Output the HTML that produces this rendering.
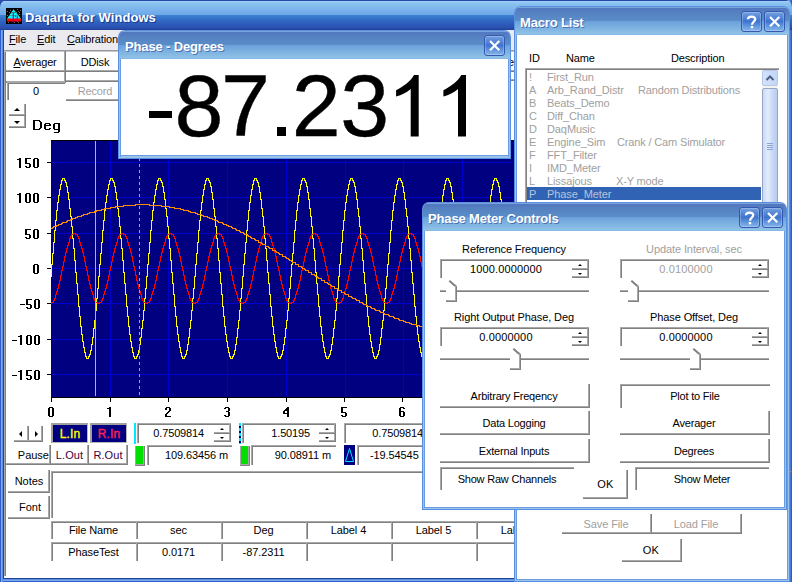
<!DOCTYPE html><html><head><meta charset="utf-8"><style>
html,body{margin:0;padding:0;} body{width:792px;height:582px;overflow:hidden;position:relative;background:#fff;font-family:"Liberation Sans", sans-serif;} div{font-family:"Liberation Sans", sans-serif;} u{text-decoration:underline;text-underline-offset:1px;}
</style></head><body>
<div style="position:absolute;left:0px;top:0px;width:8px;height:8px;background:#2a4aa8;"></div>
<div style="position:absolute;left:784px;top:0px;width:8px;height:8px;background:#6a9adc;"></div>
<div style="position:absolute;left:0px;top:8px;width:792px;height:574px;background:linear-gradient(to right,#2f5ccc 0,#2f5ccc 1px,#7aaee8 1px,#7aaee8 2px,#5a8ee0 2px,#5a8ee0 3px,#24449c 3px,#24449c 4px,#fff 4px);"></div>
<div style="position:absolute;left:3px;top:578px;width:789px;height:4px;background:linear-gradient(to bottom,#24449c 0,#24449c 1px,#5a8ee0 1px,#5a8ee0 2px,#7aaee8 2px,#7aaee8 3px,#2f5ccc 3px);"></div>
<div style="position:absolute;left:786px;top:0px;width:6px;height:582px;background:linear-gradient(to right,#4a7ad6 0,#7eaeee 2px,#5a8ee0 4px,#2f5ccc 5px);"></div>
<div style="position:absolute;left:0px;top:0px;width:792px;height:30px;border-radius:7px 7px 0 0;background:linear-gradient(to bottom,#2448a8 0px,#2448a8 1px,#a6d0f6 1px,#8cc4f0 3px,#6ca6e8 15px,#3c82d2 15px,#2f62bf 22px,#2a4fb0 28px,#24449c 29px,#24449c 30px);"></div>
<div style="position:absolute;left:6px;top:8px;width:16px;height:16px;background:#000;overflow:hidden;"><svg width="16" height="16" viewBox="0 0 16 16"><g fill="#707070"><rect x="1" y="3" width="1" height="1"/><rect x="3" y="4" width="1" height="1"/><rect x="4" y="2" width="1" height="1"/><rect x="11" y="1" width="1" height="1"/><rect x="12" y="3" width="1" height="1"/><rect x="13" y="4" width="1" height="1"/><rect x="14" y="2" width="1" height="1"/><rect x="1" y="7" width="1" height="1"/><rect x="13" y="6" width="1" height="1"/><rect x="2" y="14" width="1" height="1"/><rect x="8" y="14" width="1" height="1"/><rect x="12" y="14" width="1" height="1"/></g><polygon points="7.5,1.3 15.2,11 0.8,11" fill="#00ffff"/><rect x="5" y="4" width="6" height="1" fill="#3a8080"/><rect x="3" y="7" width="10" height="1" fill="#3a8080" opacity="0.6"/><rect x="1" y="10.5" width="14" height="3" fill="#ff0000"/><rect x="6.7" y="5" width="1.2" height="9" fill="#8000c0"/><rect x="10.7" y="8" width="1.2" height="6" fill="#a000c0"/><rect x="9" y="7.5" width="1" height="1.5" fill="#ff0000"/></svg></div>
<div style="position:absolute;left:25px;top:11px;text-align:left;font-size:13px;line-height:13px;color:#fff;font-weight:bold;white-space:nowrap;letter-spacing:0.05px;text-shadow:1px 1px 0 #1a3a90;">Daqarta for Windows</div>
<div style="position:absolute;left:4px;top:30px;width:783px;height:547px;background:#fff;"></div>
<div style="position:absolute;left:4px;top:51px;width:1px;height:525px;background:#a8a8a8;"></div>
<div style="position:absolute;left:5px;top:51px;width:1px;height:525px;background:#808080;"></div>
<div style="position:absolute;left:4px;top:576px;width:783px;height:2px;background:#fff;"></div>
<div style="position:absolute;left:4px;top:30px;width:783px;height:20px;background:#ebeaef;"></div>
<div style="position:absolute;left:4px;top:50px;width:783px;height:1px;background:#9a9a9a;"></div>
<div style="position:absolute;left:4px;top:51px;width:783px;height:1px;background:#c8c8c8;"></div>
<div style="position:absolute;left:9px;top:34px;text-align:left;font-size:11px;line-height:11px;color:#000;font-weight:normal;white-space:nowrap;letter-spacing:-0.15px;"><u>F</u>ile</div>
<div style="position:absolute;left:37px;top:34px;text-align:left;font-size:11px;line-height:11px;color:#000;font-weight:normal;white-space:nowrap;letter-spacing:-0.15px;"><u>E</u>dit</div>
<div style="position:absolute;left:67px;top:34px;text-align:left;font-size:11px;line-height:11px;color:#000;font-weight:normal;white-space:nowrap;letter-spacing:-0.15px;"><u>C</u>alibration</div>
<div style="position:absolute;left:6px;top:51px;width:60px;height:21px;box-sizing:border-box;border-right:1px solid #808080;border-bottom:1px solid #808080;box-shadow:inset -1px -1px 0 #a8a8a8;"></div>
<div style="position:absolute;left:6px;top:57px;width:58px;text-align:center;font-size:11px;line-height:11px;color:#000;font-weight:normal;white-space:nowrap;letter-spacing:-0.15px;"><u>A</u>verager</div>
<div style="position:absolute;left:66px;top:51px;width:60px;height:21px;box-sizing:border-box;border-right:1px solid #808080;border-bottom:1px solid #808080;box-shadow:inset -1px -1px 0 #a8a8a8;"></div>
<div style="position:absolute;left:66px;top:57px;width:58px;text-align:center;font-size:11px;line-height:11px;color:#000;font-weight:normal;white-space:nowrap;letter-spacing:-0.15px;">DDisk</div>
<div style="position:absolute;left:6px;top:72px;width:60px;height:11px;box-sizing:border-box;border-right:1px solid #808080;border-bottom:1px solid #808080;box-shadow:inset -1px -1px 0 #a8a8a8;"></div>
<div style="position:absolute;left:66px;top:72px;width:60px;height:10px;box-sizing:border-box;border-right:1px solid #808080;border-bottom:1px solid #808080;box-shadow:inset -1px -1px 0 #a8a8a8;"></div>
<div style="position:absolute;left:7px;top:82px;width:58px;height:18px;box-sizing:border-box;border-left:1px solid #a8a8a8;border-top:1px solid #a8a8a8;box-shadow:inset 1px 1px 0 #808080;"></div>
<div style="position:absolute;left:7px;top:86px;width:58px;text-align:center;font-size:11px;line-height:11px;color:#000;font-weight:normal;white-space:nowrap;letter-spacing:-0.15px;">0</div>
<div style="position:absolute;left:66px;top:82px;width:60px;height:19px;box-sizing:border-box;border-right:1px solid #808080;border-bottom:1px solid #808080;box-shadow:inset -1px -1px 0 #a8a8a8;"></div>
<div style="position:absolute;left:66px;top:86px;width:58px;text-align:center;font-size:11px;line-height:11px;color:#a0a0a0;font-weight:normal;white-space:nowrap;letter-spacing:-0.15px;">Record</div>
<div style="position:absolute;left:9px;top:104px;width:17px;height:12px;box-sizing:border-box;border-right:1px solid #808080;border-bottom:1px solid #808080;box-shadow:inset -1px -1px 0 #a8a8a8;"></div>
<div style="position:absolute;left:9px;top:116px;width:17px;height:12px;box-sizing:border-box;border-right:1px solid #808080;border-bottom:1px solid #808080;box-shadow:inset -1px -1px 0 #a8a8a8;"></div>
<div style="position:absolute;left:14px;top:108px;width:0px;height:0px;border-left:3px solid transparent;border-right:3px solid transparent;border-bottom:3px solid #000;"></div>
<div style="position:absolute;left:14px;top:121px;width:0px;height:0px;border-left:3px solid transparent;border-right:3px solid transparent;border-top:3px solid #000;"></div>
<div style="position:absolute;left:505px;top:71px;width:9px;height:1px;background:#808080;"></div>
<div style="position:absolute;left:505px;top:70px;width:9px;height:1px;background:#a8a8a8;"></div>
<div style="position:absolute;left:505px;top:80px;width:9px;height:1px;background:#808080;"></div>
<div style="position:absolute;left:505px;top:79px;width:9px;height:1px;background:#a8a8a8;"></div>
<div style="position:absolute;left:508px;top:57px;text-align:left;font-size:11px;line-height:11px;color:#000;font-weight:normal;white-space:nowrap;letter-spacing:0px;">e</div>
<svg width="792" height="582" style="position:absolute;left:0;top:0"><rect x="51" y="140" width="463" height="258" fill="#000080" shape-rendering="crispEdges"/><rect x="51" y="140" width="463" height="1" fill="#000" shape-rendering="crispEdges"/><rect x="51" y="397" width="463" height="1" fill="#000" shape-rendering="crispEdges"/><rect x="51" y="162" width="463" height="1" fill="#0000cc" shape-rendering="crispEdges"/><rect x="47" y="162" width="4" height="1" fill="#000" shape-rendering="crispEdges"/><rect x="51" y="197" width="463" height="1" fill="#0000cc" shape-rendering="crispEdges"/><rect x="47" y="197" width="4" height="1" fill="#000" shape-rendering="crispEdges"/><rect x="51" y="233" width="463" height="1" fill="#0000cc" shape-rendering="crispEdges"/><rect x="47" y="233" width="4" height="1" fill="#000" shape-rendering="crispEdges"/><rect x="51" y="268" width="463" height="1" fill="#0000cc" shape-rendering="crispEdges"/><rect x="47" y="268" width="4" height="1" fill="#000" shape-rendering="crispEdges"/><rect x="51" y="303" width="463" height="1" fill="#0000cc" shape-rendering="crispEdges"/><rect x="47" y="303" width="4" height="1" fill="#000" shape-rendering="crispEdges"/><rect x="51" y="339" width="463" height="1" fill="#0000cc" shape-rendering="crispEdges"/><rect x="47" y="339" width="4" height="1" fill="#000" shape-rendering="crispEdges"/><rect x="51" y="374" width="463" height="1" fill="#0000cc" shape-rendering="crispEdges"/><rect x="47" y="374" width="4" height="1" fill="#000" shape-rendering="crispEdges"/><rect x="110" y="141" width="1" height="255" fill="#0000cc" shape-rendering="crispEdges"/><rect x="168" y="141" width="1" height="255" fill="#0000cc" shape-rendering="crispEdges"/><rect x="227" y="141" width="1" height="255" fill="#0000cc" shape-rendering="crispEdges"/><rect x="286" y="141" width="1" height="255" fill="#0000cc" shape-rendering="crispEdges"/><rect x="345" y="141" width="1" height="255" fill="#0000cc" shape-rendering="crispEdges"/><rect x="403" y="141" width="1" height="255" fill="#0000cc" shape-rendering="crispEdges"/><rect x="462" y="141" width="1" height="255" fill="#0000cc" shape-rendering="crispEdges"/><rect x="51" y="398" width="1" height="4" fill="#000" shape-rendering="crispEdges"/><rect x="110" y="398" width="1" height="4" fill="#000" shape-rendering="crispEdges"/><rect x="168" y="398" width="1" height="4" fill="#000" shape-rendering="crispEdges"/><rect x="227" y="398" width="1" height="4" fill="#000" shape-rendering="crispEdges"/><rect x="286" y="398" width="1" height="4" fill="#000" shape-rendering="crispEdges"/><rect x="344" y="398" width="1" height="4" fill="#000" shape-rendering="crispEdges"/><rect x="402" y="398" width="1" height="4" fill="#000" shape-rendering="crispEdges"/><defs><clipPath id="pc"><rect x="51" y="141" width="463" height="256"/></clipPath></defs><g clip-path="url(#pc)"><path d="M51 264h1v13h-1zM52 253h1v12h-1zM53 242h1v12h-1zM54 230h1v13h-1zM55 220h1v11h-1zM56 210h1v11h-1zM57 202h1v9h-1zM58 195h1v8h-1zM59 189h1v7h-1zM60 184h1v6h-1zM61 180h1v5h-1zM62 178h1v3h-1zM63 178h1v1h-1zM64 178h1v3h-1zM65 180h1v3h-1zM66 182h1v5h-1zM67 186h1v7h-1zM68 192h1v8h-1zM69 199h1v10h-1zM70 208h1v9h-1zM71 216h1v11h-1zM72 226h1v13h-1zM73 238h1v11h-1zM74 248h1v13h-1zM75 260h1v13h-1zM76 272h1v12h-1zM77 283h1v12h-1zM78 294h1v13h-1zM79 306h1v11h-1zM80 316h1v11h-1zM81 326h1v9h-1zM82 334h1v8h-1zM83 341h1v7h-1zM84 347h1v6h-1zM85 352h1v5h-1zM86 356h1v3h-1zM87 358h1v1h-1zM88 356h1v3h-1zM89 354h1v3h-1zM90 350h1v5h-1zM91 344h1v7h-1zM92 337h1v8h-1zM93 328h1v10h-1zM94 320h1v9h-1zM95 310h1v11h-1zM96 298h1v13h-1zM97 288h1v11h-1zM98 276h1v13h-1zM99 264h1v13h-1zM100 253h1v12h-1zM101 242h1v12h-1zM102 230h1v13h-1zM103 220h1v11h-1zM104 210h1v11h-1zM105 202h1v9h-1zM106 195h1v8h-1zM107 189h1v7h-1zM108 184h1v6h-1zM109 180h1v5h-1zM110 178h1v3h-1zM111 178h1v1h-1zM112 178h1v3h-1zM113 180h1v3h-1zM114 182h1v5h-1zM115 186h1v7h-1zM116 192h1v8h-1zM117 199h1v10h-1zM118 208h1v9h-1zM119 216h1v11h-1zM120 226h1v13h-1zM121 238h1v11h-1zM122 248h1v13h-1zM123 260h1v13h-1zM124 272h1v12h-1zM125 283h1v12h-1zM126 294h1v13h-1zM127 306h1v11h-1zM128 316h1v11h-1zM129 326h1v9h-1zM130 334h1v8h-1zM131 341h1v7h-1zM132 347h1v6h-1zM133 352h1v5h-1zM134 356h1v3h-1zM135 358h1v1h-1zM136 356h1v3h-1zM137 354h1v3h-1zM138 350h1v5h-1zM139 344h1v7h-1zM140 337h1v8h-1zM141 328h1v10h-1zM142 320h1v9h-1zM143 310h1v11h-1zM144 298h1v13h-1zM145 288h1v11h-1zM146 276h1v13h-1zM147 264h1v13h-1zM148 253h1v12h-1zM149 242h1v12h-1zM150 230h1v13h-1zM151 220h1v11h-1zM152 210h1v11h-1zM153 202h1v9h-1zM154 195h1v8h-1zM155 189h1v7h-1zM156 184h1v6h-1zM157 180h1v5h-1zM158 178h1v3h-1zM159 178h1v1h-1zM160 178h1v3h-1zM161 180h1v3h-1zM162 182h1v5h-1zM163 186h1v7h-1zM164 192h1v8h-1zM165 199h1v10h-1zM166 208h1v9h-1zM167 216h1v11h-1zM168 226h1v13h-1zM169 238h1v11h-1zM170 248h1v13h-1zM171 260h1v13h-1zM172 272h1v12h-1zM173 283h1v12h-1zM174 294h1v13h-1zM175 306h1v11h-1zM176 316h1v11h-1zM177 326h1v9h-1zM178 334h1v8h-1zM179 341h1v7h-1zM180 347h1v6h-1zM181 352h1v5h-1zM182 356h1v3h-1zM183 358h1v1h-1zM184 356h1v3h-1zM185 354h1v3h-1zM186 350h1v5h-1zM187 344h1v7h-1zM188 337h1v8h-1zM189 328h1v10h-1zM190 320h1v9h-1zM191 310h1v11h-1zM192 298h1v13h-1zM193 288h1v11h-1zM194 276h1v13h-1zM195 264h1v13h-1zM196 253h1v12h-1zM197 242h1v12h-1zM198 230h1v13h-1zM199 220h1v11h-1zM200 210h1v11h-1zM201 202h1v9h-1zM202 195h1v8h-1zM203 189h1v7h-1zM204 184h1v6h-1zM205 180h1v5h-1zM206 178h1v3h-1zM207 178h1v1h-1zM208 178h1v3h-1zM209 180h1v3h-1zM210 182h1v5h-1zM211 186h1v7h-1zM212 192h1v8h-1zM213 199h1v10h-1zM214 208h1v9h-1zM215 216h1v11h-1zM216 226h1v13h-1zM217 238h1v11h-1zM218 248h1v13h-1zM219 260h1v13h-1zM220 272h1v12h-1zM221 283h1v12h-1zM222 294h1v13h-1zM223 306h1v11h-1zM224 316h1v11h-1zM225 326h1v9h-1zM226 334h1v8h-1zM227 341h1v7h-1zM228 347h1v6h-1zM229 352h1v5h-1zM230 356h1v3h-1zM231 358h1v1h-1zM232 356h1v3h-1zM233 354h1v3h-1zM234 350h1v5h-1zM235 344h1v7h-1zM236 337h1v8h-1zM237 328h1v10h-1zM238 320h1v9h-1zM239 310h1v11h-1zM240 298h1v13h-1zM241 288h1v11h-1zM242 276h1v13h-1zM243 264h1v13h-1zM244 253h1v12h-1zM245 242h1v12h-1zM246 230h1v13h-1zM247 220h1v11h-1zM248 210h1v11h-1zM249 202h1v9h-1zM250 195h1v8h-1zM251 189h1v7h-1zM252 184h1v6h-1zM253 180h1v5h-1zM254 178h1v3h-1zM255 178h1v1h-1zM256 178h1v3h-1zM257 180h1v3h-1zM258 182h1v5h-1zM259 186h1v7h-1zM260 192h1v8h-1zM261 199h1v10h-1zM262 208h1v9h-1zM263 216h1v11h-1zM264 226h1v13h-1zM265 238h1v11h-1zM266 248h1v13h-1zM267 260h1v13h-1zM268 272h1v12h-1zM269 283h1v12h-1zM270 294h1v13h-1zM271 306h1v11h-1zM272 316h1v11h-1zM273 326h1v9h-1zM274 334h1v8h-1zM275 341h1v7h-1zM276 347h1v6h-1zM277 352h1v5h-1zM278 356h1v3h-1zM279 358h1v1h-1zM280 356h1v3h-1zM281 354h1v3h-1zM282 350h1v5h-1zM283 344h1v7h-1zM284 337h1v8h-1zM285 328h1v10h-1zM286 320h1v9h-1zM287 310h1v11h-1zM288 298h1v13h-1zM289 288h1v11h-1zM290 276h1v13h-1zM291 264h1v13h-1zM292 253h1v12h-1zM293 242h1v12h-1zM294 230h1v13h-1zM295 220h1v11h-1zM296 210h1v11h-1zM297 202h1v9h-1zM298 195h1v8h-1zM299 189h1v7h-1zM300 184h1v6h-1zM301 180h1v5h-1zM302 178h1v3h-1zM303 178h1v1h-1zM304 178h1v3h-1zM305 180h1v3h-1zM306 182h1v5h-1zM307 186h1v7h-1zM308 192h1v8h-1zM309 199h1v10h-1zM310 208h1v9h-1zM311 216h1v11h-1zM312 226h1v13h-1zM313 238h1v11h-1zM314 248h1v13h-1zM315 260h1v13h-1zM316 272h1v12h-1zM317 283h1v12h-1zM318 294h1v13h-1zM319 306h1v11h-1zM320 316h1v11h-1zM321 326h1v9h-1zM322 334h1v8h-1zM323 341h1v7h-1zM324 347h1v6h-1zM325 352h1v5h-1zM326 356h1v3h-1zM327 358h1v1h-1zM328 356h1v3h-1zM329 354h1v3h-1zM330 350h1v5h-1zM331 344h1v7h-1zM332 337h1v8h-1zM333 328h1v10h-1zM334 320h1v9h-1zM335 310h1v11h-1zM336 298h1v13h-1zM337 288h1v11h-1zM338 276h1v13h-1zM339 264h1v13h-1zM340 253h1v12h-1zM341 242h1v12h-1zM342 230h1v13h-1zM343 220h1v11h-1zM344 210h1v11h-1zM345 202h1v9h-1zM346 195h1v8h-1zM347 189h1v7h-1zM348 184h1v6h-1zM349 180h1v5h-1zM350 178h1v3h-1zM351 178h1v1h-1zM352 178h1v3h-1zM353 180h1v3h-1zM354 182h1v5h-1zM355 186h1v7h-1zM356 192h1v8h-1zM357 199h1v10h-1zM358 208h1v9h-1zM359 216h1v11h-1zM360 226h1v13h-1zM361 238h1v11h-1zM362 248h1v13h-1zM363 260h1v13h-1zM364 272h1v12h-1zM365 283h1v12h-1zM366 294h1v13h-1zM367 306h1v11h-1zM368 316h1v11h-1zM369 326h1v9h-1zM370 334h1v8h-1zM371 341h1v7h-1zM372 347h1v6h-1zM373 352h1v5h-1zM374 356h1v3h-1zM375 358h1v1h-1zM376 356h1v3h-1zM377 354h1v3h-1zM378 350h1v5h-1zM379 344h1v7h-1zM380 337h1v8h-1zM381 328h1v10h-1zM382 320h1v9h-1zM383 310h1v11h-1zM384 298h1v13h-1zM385 288h1v11h-1zM386 276h1v13h-1zM387 264h1v13h-1zM388 253h1v12h-1zM389 242h1v12h-1zM390 230h1v13h-1zM391 220h1v11h-1zM392 210h1v11h-1zM393 202h1v9h-1zM394 195h1v8h-1zM395 189h1v7h-1zM396 184h1v6h-1zM397 180h1v5h-1zM398 178h1v3h-1zM399 178h1v1h-1zM400 178h1v3h-1zM401 180h1v3h-1zM402 182h1v5h-1zM403 186h1v7h-1zM404 192h1v8h-1zM405 199h1v10h-1zM406 208h1v9h-1zM407 216h1v11h-1zM408 226h1v13h-1zM409 238h1v11h-1zM410 248h1v13h-1zM411 260h1v13h-1zM412 272h1v12h-1zM413 283h1v12h-1zM414 294h1v13h-1zM415 306h1v11h-1zM416 316h1v11h-1zM417 326h1v9h-1zM418 334h1v8h-1zM419 341h1v7h-1zM420 347h1v6h-1zM421 352h1v5h-1zM422 356h1v3h-1zM423 358h1v1h-1zM424 356h1v3h-1zM425 354h1v3h-1zM426 350h1v5h-1zM427 344h1v7h-1zM428 337h1v8h-1zM429 328h1v10h-1zM430 320h1v9h-1zM431 310h1v11h-1zM432 298h1v13h-1zM433 288h1v11h-1zM434 276h1v13h-1zM435 264h1v13h-1zM436 253h1v12h-1zM437 242h1v12h-1zM438 230h1v13h-1zM439 220h1v11h-1zM440 210h1v11h-1zM441 202h1v9h-1zM442 195h1v8h-1zM443 189h1v7h-1zM444 184h1v6h-1zM445 180h1v5h-1zM446 178h1v3h-1zM447 178h1v1h-1zM448 178h1v3h-1zM449 180h1v3h-1zM450 182h1v5h-1zM451 186h1v7h-1zM452 192h1v8h-1zM453 199h1v10h-1zM454 208h1v9h-1zM455 216h1v11h-1zM456 226h1v13h-1zM457 238h1v11h-1zM458 248h1v13h-1zM459 260h1v13h-1zM460 272h1v12h-1zM461 283h1v12h-1zM462 294h1v13h-1zM463 306h1v11h-1zM464 316h1v11h-1zM465 326h1v9h-1zM466 334h1v8h-1zM467 341h1v7h-1zM468 347h1v6h-1zM469 352h1v5h-1zM470 356h1v3h-1zM471 358h1v1h-1zM472 356h1v3h-1zM473 354h1v3h-1zM474 350h1v5h-1zM475 344h1v7h-1zM476 337h1v8h-1zM477 328h1v10h-1zM478 320h1v9h-1zM479 310h1v11h-1zM480 298h1v13h-1zM481 288h1v11h-1zM482 276h1v13h-1zM483 264h1v13h-1zM484 253h1v12h-1zM485 242h1v12h-1zM486 230h1v13h-1zM487 220h1v11h-1zM488 210h1v11h-1zM489 202h1v9h-1zM490 195h1v8h-1zM491 189h1v7h-1zM492 184h1v6h-1zM493 180h1v5h-1zM494 178h1v3h-1zM495 178h1v1h-1zM496 178h1v3h-1zM497 180h1v3h-1zM498 182h1v5h-1zM499 186h1v7h-1zM500 192h1v8h-1zM501 199h1v10h-1zM502 208h1v9h-1zM503 216h1v11h-1zM504 226h1v13h-1zM505 238h1v11h-1zM506 248h1v13h-1zM507 260h1v13h-1zM508 272h1v12h-1zM509 283h1v12h-1zM510 294h1v13h-1zM511 306h1v11h-1zM512 316h1v11h-1zM513 326h1v9h-1zM514 334h1v8h-1z" fill="#ffff00" shape-rendering="crispEdges"/><path d="M51 302h1v2h-1zM52 302h1v1h-1zM53 300h1v3h-1zM54 298h1v3h-1zM55 294h1v5h-1zM56 291h1v4h-1zM57 288h1v4h-1zM58 284h1v5h-1zM59 280h1v5h-1zM60 275h1v6h-1zM61 270h1v6h-1zM62 266h1v5h-1zM63 261h1v6h-1zM64 256h1v6h-1zM65 252h1v5h-1zM66 248h1v5h-1zM67 245h1v4h-1zM68 242h1v4h-1zM69 238h1v5h-1zM70 236h1v3h-1zM71 234h1v3h-1zM72 234h1v1h-1zM73 233h1v2h-1zM74 233h1v1h-1zM75 233h1v2h-1zM76 234h1v1h-1zM77 234h1v3h-1zM78 236h1v3h-1zM79 238h1v5h-1zM80 242h1v4h-1zM81 245h1v4h-1zM82 248h1v5h-1zM83 252h1v5h-1zM84 256h1v6h-1zM85 261h1v6h-1zM86 266h1v5h-1zM87 270h1v6h-1zM88 275h1v6h-1zM89 280h1v5h-1zM90 284h1v5h-1zM91 288h1v4h-1zM92 291h1v4h-1zM93 294h1v5h-1zM94 298h1v3h-1zM95 300h1v3h-1zM96 302h1v1h-1zM97 302h1v2h-1zM98 303h1v1h-1zM99 302h1v2h-1zM100 302h1v1h-1zM101 300h1v3h-1zM102 298h1v3h-1zM103 294h1v5h-1zM104 291h1v4h-1zM105 288h1v4h-1zM106 284h1v5h-1zM107 280h1v5h-1zM108 275h1v6h-1zM109 270h1v6h-1zM110 266h1v5h-1zM111 261h1v6h-1zM112 256h1v6h-1zM113 252h1v5h-1zM114 248h1v5h-1zM115 245h1v4h-1zM116 242h1v4h-1zM117 238h1v5h-1zM118 236h1v3h-1zM119 234h1v3h-1zM120 234h1v1h-1zM121 233h1v2h-1zM122 233h1v1h-1zM123 233h1v2h-1zM124 234h1v1h-1zM125 234h1v3h-1zM126 236h1v3h-1zM127 238h1v5h-1zM128 242h1v4h-1zM129 245h1v4h-1zM130 248h1v5h-1zM131 252h1v5h-1zM132 256h1v6h-1zM133 261h1v6h-1zM134 266h1v5h-1zM135 270h1v6h-1zM136 275h1v6h-1zM137 280h1v5h-1zM138 284h1v5h-1zM139 288h1v4h-1zM140 291h1v4h-1zM141 294h1v5h-1zM142 298h1v3h-1zM143 300h1v3h-1zM144 302h1v1h-1zM145 302h1v2h-1zM146 303h1v1h-1zM147 302h1v2h-1zM148 302h1v1h-1zM149 300h1v3h-1zM150 298h1v3h-1zM151 294h1v5h-1zM152 291h1v4h-1zM153 288h1v4h-1zM154 284h1v5h-1zM155 280h1v5h-1zM156 275h1v6h-1zM157 270h1v6h-1zM158 266h1v5h-1zM159 261h1v6h-1zM160 256h1v6h-1zM161 252h1v5h-1zM162 248h1v5h-1zM163 245h1v4h-1zM164 242h1v4h-1zM165 238h1v5h-1zM166 236h1v3h-1zM167 234h1v3h-1zM168 234h1v1h-1zM169 233h1v2h-1zM170 233h1v1h-1zM171 233h1v2h-1zM172 234h1v1h-1zM173 234h1v3h-1zM174 236h1v3h-1zM175 238h1v5h-1zM176 242h1v4h-1zM177 245h1v4h-1zM178 248h1v5h-1zM179 252h1v5h-1zM180 256h1v6h-1zM181 261h1v6h-1zM182 266h1v5h-1zM183 270h1v6h-1zM184 275h1v6h-1zM185 280h1v5h-1zM186 284h1v5h-1zM187 288h1v4h-1zM188 291h1v4h-1zM189 294h1v5h-1zM190 298h1v3h-1zM191 300h1v3h-1zM192 302h1v1h-1zM193 302h1v2h-1zM194 303h1v1h-1zM195 302h1v2h-1zM196 302h1v1h-1zM197 300h1v3h-1zM198 298h1v3h-1zM199 294h1v5h-1zM200 291h1v4h-1zM201 288h1v4h-1zM202 284h1v5h-1zM203 280h1v5h-1zM204 275h1v6h-1zM205 270h1v6h-1zM206 266h1v5h-1zM207 261h1v6h-1zM208 256h1v6h-1zM209 252h1v5h-1zM210 248h1v5h-1zM211 245h1v4h-1zM212 242h1v4h-1zM213 238h1v5h-1zM214 236h1v3h-1zM215 234h1v3h-1zM216 234h1v1h-1zM217 233h1v2h-1zM218 233h1v1h-1zM219 233h1v2h-1zM220 234h1v1h-1zM221 234h1v3h-1zM222 236h1v3h-1zM223 238h1v5h-1zM224 242h1v4h-1zM225 245h1v4h-1zM226 248h1v5h-1zM227 252h1v5h-1zM228 256h1v6h-1zM229 261h1v6h-1zM230 266h1v5h-1zM231 270h1v6h-1zM232 275h1v6h-1zM233 280h1v5h-1zM234 284h1v5h-1zM235 288h1v4h-1zM236 291h1v4h-1zM237 294h1v5h-1zM238 298h1v3h-1zM239 300h1v3h-1zM240 302h1v1h-1zM241 302h1v2h-1zM242 303h1v1h-1zM243 302h1v2h-1zM244 302h1v1h-1zM245 300h1v3h-1zM246 298h1v3h-1zM247 294h1v5h-1zM248 291h1v4h-1zM249 288h1v4h-1zM250 284h1v5h-1zM251 280h1v5h-1zM252 275h1v6h-1zM253 270h1v6h-1zM254 266h1v5h-1zM255 261h1v6h-1zM256 256h1v6h-1zM257 252h1v5h-1zM258 248h1v5h-1zM259 245h1v4h-1zM260 242h1v4h-1zM261 238h1v5h-1zM262 236h1v3h-1zM263 234h1v3h-1zM264 234h1v1h-1zM265 233h1v2h-1zM266 233h1v1h-1zM267 233h1v2h-1zM268 234h1v1h-1zM269 234h1v3h-1zM270 236h1v3h-1zM271 238h1v5h-1zM272 242h1v4h-1zM273 245h1v4h-1zM274 248h1v5h-1zM275 252h1v5h-1zM276 256h1v6h-1zM277 261h1v6h-1zM278 266h1v5h-1zM279 270h1v6h-1zM280 275h1v6h-1zM281 280h1v5h-1zM282 284h1v5h-1zM283 288h1v4h-1zM284 291h1v4h-1zM285 294h1v5h-1zM286 298h1v3h-1zM287 300h1v3h-1zM288 302h1v1h-1zM289 302h1v2h-1zM290 303h1v1h-1zM291 302h1v2h-1zM292 302h1v1h-1zM293 300h1v3h-1zM294 298h1v3h-1zM295 294h1v5h-1zM296 291h1v4h-1zM297 288h1v4h-1zM298 284h1v5h-1zM299 280h1v5h-1zM300 275h1v6h-1zM301 270h1v6h-1zM302 266h1v5h-1zM303 261h1v6h-1zM304 256h1v6h-1zM305 252h1v5h-1zM306 248h1v5h-1zM307 245h1v4h-1zM308 242h1v4h-1zM309 238h1v5h-1zM310 236h1v3h-1zM311 234h1v3h-1zM312 234h1v1h-1zM313 233h1v2h-1zM314 233h1v1h-1zM315 233h1v2h-1zM316 234h1v1h-1zM317 234h1v3h-1zM318 236h1v3h-1zM319 238h1v5h-1zM320 242h1v4h-1zM321 245h1v4h-1zM322 248h1v5h-1zM323 252h1v5h-1zM324 256h1v6h-1zM325 261h1v6h-1zM326 266h1v5h-1zM327 270h1v6h-1zM328 275h1v6h-1zM329 280h1v5h-1zM330 284h1v5h-1zM331 288h1v4h-1zM332 291h1v4h-1zM333 294h1v5h-1zM334 298h1v3h-1zM335 300h1v3h-1zM336 302h1v1h-1zM337 302h1v2h-1zM338 303h1v1h-1zM339 302h1v2h-1zM340 302h1v1h-1zM341 300h1v3h-1zM342 298h1v3h-1zM343 294h1v5h-1zM344 291h1v4h-1zM345 288h1v4h-1zM346 284h1v5h-1zM347 280h1v5h-1zM348 275h1v6h-1zM349 270h1v6h-1zM350 266h1v5h-1zM351 261h1v6h-1zM352 256h1v6h-1zM353 252h1v5h-1zM354 248h1v5h-1zM355 245h1v4h-1zM356 242h1v4h-1zM357 238h1v5h-1zM358 236h1v3h-1zM359 234h1v3h-1zM360 234h1v1h-1zM361 233h1v2h-1zM362 233h1v1h-1zM363 233h1v2h-1zM364 234h1v1h-1zM365 234h1v3h-1zM366 236h1v3h-1zM367 238h1v5h-1zM368 242h1v4h-1zM369 245h1v4h-1zM370 248h1v5h-1zM371 252h1v5h-1zM372 256h1v6h-1zM373 261h1v6h-1zM374 266h1v5h-1zM375 270h1v6h-1zM376 275h1v6h-1zM377 280h1v5h-1zM378 284h1v5h-1zM379 288h1v4h-1zM380 291h1v4h-1zM381 294h1v5h-1zM382 298h1v3h-1zM383 300h1v3h-1zM384 302h1v1h-1zM385 302h1v2h-1zM386 303h1v1h-1zM387 302h1v2h-1zM388 302h1v1h-1zM389 300h1v3h-1zM390 298h1v3h-1zM391 294h1v5h-1zM392 291h1v4h-1zM393 288h1v4h-1zM394 284h1v5h-1zM395 280h1v5h-1zM396 275h1v6h-1zM397 270h1v6h-1zM398 266h1v5h-1zM399 261h1v6h-1zM400 256h1v6h-1zM401 252h1v5h-1zM402 248h1v5h-1zM403 245h1v4h-1zM404 242h1v4h-1zM405 238h1v5h-1zM406 236h1v3h-1zM407 234h1v3h-1zM408 234h1v1h-1zM409 233h1v2h-1zM410 233h1v1h-1zM411 233h1v2h-1zM412 234h1v1h-1zM413 234h1v3h-1zM414 236h1v3h-1zM415 238h1v5h-1zM416 242h1v4h-1zM417 245h1v4h-1zM418 248h1v5h-1zM419 252h1v5h-1zM420 256h1v6h-1zM421 261h1v6h-1zM422 266h1v5h-1zM423 270h1v6h-1zM424 275h1v6h-1zM425 280h1v5h-1zM426 284h1v5h-1zM427 288h1v4h-1zM428 291h1v4h-1zM429 294h1v5h-1zM430 298h1v3h-1zM431 300h1v3h-1zM432 302h1v1h-1zM433 302h1v2h-1zM434 303h1v1h-1zM435 302h1v2h-1zM436 302h1v1h-1zM437 300h1v3h-1zM438 298h1v3h-1zM439 294h1v5h-1zM440 291h1v4h-1zM441 288h1v4h-1zM442 284h1v5h-1zM443 280h1v5h-1zM444 275h1v6h-1zM445 270h1v6h-1zM446 266h1v5h-1zM447 261h1v6h-1zM448 256h1v6h-1zM449 252h1v5h-1zM450 248h1v5h-1zM451 245h1v4h-1zM452 242h1v4h-1zM453 238h1v5h-1zM454 236h1v3h-1zM455 234h1v3h-1zM456 234h1v1h-1zM457 233h1v2h-1zM458 233h1v1h-1zM459 233h1v2h-1zM460 234h1v1h-1zM461 234h1v3h-1zM462 236h1v3h-1zM463 238h1v5h-1zM464 242h1v4h-1zM465 245h1v4h-1zM466 248h1v5h-1zM467 252h1v5h-1zM468 256h1v6h-1zM469 261h1v6h-1zM470 266h1v5h-1zM471 270h1v6h-1zM472 275h1v6h-1zM473 280h1v5h-1zM474 284h1v5h-1zM475 288h1v4h-1zM476 291h1v4h-1zM477 294h1v5h-1zM478 298h1v3h-1zM479 300h1v3h-1zM480 302h1v1h-1zM481 302h1v2h-1zM482 303h1v1h-1zM483 302h1v2h-1zM484 302h1v1h-1zM485 300h1v3h-1zM486 298h1v3h-1zM487 294h1v5h-1zM488 291h1v4h-1zM489 288h1v4h-1zM490 284h1v5h-1zM491 280h1v5h-1zM492 275h1v6h-1zM493 270h1v6h-1zM494 266h1v5h-1zM495 261h1v6h-1zM496 256h1v6h-1zM497 252h1v5h-1zM498 248h1v5h-1zM499 245h1v4h-1zM500 242h1v4h-1zM501 238h1v5h-1zM502 236h1v3h-1zM503 234h1v3h-1zM504 234h1v1h-1zM505 233h1v2h-1zM506 233h1v1h-1zM507 233h1v2h-1zM508 234h1v1h-1zM509 234h1v3h-1zM510 236h1v3h-1zM511 238h1v5h-1zM512 242h1v4h-1zM513 245h1v4h-1zM514 248h1v5h-1z" fill="#ff0000" shape-rendering="crispEdges"/><path d="M51 228h1v1h-1zM52 227h1v2h-1zM53 226h1v2h-1zM54 226h1v1h-1zM55 226h1v1h-1zM56 225h1v2h-1zM57 225h1v1h-1zM58 224h1v2h-1zM59 224h1v1h-1zM60 224h1v1h-1zM61 223h1v2h-1zM62 222h1v2h-1zM63 222h1v1h-1zM64 222h1v1h-1zM65 222h1v1h-1zM66 221h1v2h-1zM67 220h1v2h-1zM68 220h1v1h-1zM69 220h1v1h-1zM70 219h1v2h-1zM71 219h1v1h-1zM72 218h1v2h-1zM73 218h1v1h-1zM74 218h1v1h-1zM75 217h1v2h-1zM76 217h1v1h-1zM77 216h1v2h-1zM78 216h1v1h-1zM79 216h1v1h-1zM80 216h1v1h-1zM81 215h1v2h-1zM82 215h1v1h-1zM83 214h1v2h-1zM84 214h1v1h-1zM85 214h1v1h-1zM86 214h1v1h-1zM87 213h1v2h-1zM88 213h1v1h-1zM89 212h1v2h-1zM90 212h1v1h-1zM91 212h1v1h-1zM92 212h1v1h-1zM93 212h1v1h-1zM94 211h1v2h-1zM95 211h1v1h-1zM96 210h1v2h-1zM97 210h1v1h-1zM98 210h1v1h-1zM99 210h1v1h-1zM100 210h1v1h-1zM101 209h1v2h-1zM102 209h1v1h-1zM103 209h1v1h-1zM104 208h1v2h-1zM105 208h1v1h-1zM106 208h1v1h-1zM107 208h1v1h-1zM108 208h1v1h-1zM109 208h1v1h-1zM110 207h1v2h-1zM111 207h1v1h-1zM112 207h1v1h-1zM113 207h1v1h-1zM114 207h1v1h-1zM115 206h1v2h-1zM116 206h1v1h-1zM117 206h1v1h-1zM118 206h1v1h-1zM119 206h1v1h-1zM120 206h1v1h-1zM121 206h1v1h-1zM122 206h1v1h-1zM123 205h1v2h-1zM124 205h1v1h-1zM125 205h1v1h-1zM126 205h1v1h-1zM127 205h1v1h-1zM128 205h1v1h-1zM129 205h1v1h-1zM130 205h1v1h-1zM131 205h1v1h-1zM132 205h1v1h-1zM133 205h1v1h-1zM134 205h1v1h-1zM135 204h1v2h-1zM136 204h1v1h-1zM137 204h1v1h-1zM138 204h1v1h-1zM139 204h1v1h-1zM140 204h1v1h-1zM141 204h1v1h-1zM142 204h1v1h-1zM143 204h1v1h-1zM144 204h1v1h-1zM145 204h1v1h-1zM146 204h1v1h-1zM147 204h1v1h-1zM148 204h1v1h-1zM149 204h1v2h-1zM150 205h1v1h-1zM151 205h1v1h-1zM152 205h1v1h-1zM153 205h1v1h-1zM154 205h1v1h-1zM155 205h1v1h-1zM156 205h1v1h-1zM157 205h1v1h-1zM158 205h1v1h-1zM159 205h1v1h-1zM160 205h1v1h-1zM161 205h1v2h-1zM162 206h1v1h-1zM163 206h1v1h-1zM164 206h1v1h-1zM165 206h1v1h-1zM166 206h1v1h-1zM167 206h1v1h-1zM168 206h1v1h-1zM169 206h1v2h-1zM170 207h1v1h-1zM171 207h1v1h-1zM172 207h1v1h-1zM173 207h1v1h-1zM174 207h1v2h-1zM175 208h1v1h-1zM176 208h1v1h-1zM177 208h1v1h-1zM178 208h1v1h-1zM179 208h1v1h-1zM180 208h1v2h-1zM181 209h1v1h-1zM182 209h1v1h-1zM183 209h1v2h-1zM184 210h1v1h-1zM185 210h1v1h-1zM186 210h1v1h-1zM187 210h1v1h-1zM188 210h1v2h-1zM189 211h1v1h-1zM190 211h1v2h-1zM191 212h1v1h-1zM192 212h1v1h-1zM193 212h1v1h-1zM194 212h1v1h-1zM195 212h1v2h-1zM196 213h1v1h-1zM197 213h1v2h-1zM198 214h1v1h-1zM199 214h1v1h-1zM200 214h1v1h-1zM201 214h1v2h-1zM202 215h1v1h-1zM203 215h1v2h-1zM204 216h1v1h-1zM205 216h1v1h-1zM206 216h1v1h-1zM207 216h1v2h-1zM208 217h1v1h-1zM209 217h1v2h-1zM210 218h1v1h-1zM211 218h1v1h-1zM212 218h1v2h-1zM213 219h1v1h-1zM214 219h1v2h-1zM215 220h1v1h-1zM216 220h1v1h-1zM217 220h1v2h-1zM218 221h1v2h-1zM219 222h1v1h-1zM220 222h1v1h-1zM221 222h1v1h-1zM222 222h1v2h-1zM223 223h1v2h-1zM224 224h1v1h-1zM225 224h1v1h-1zM226 224h1v2h-1zM227 225h1v1h-1zM228 225h1v2h-1zM229 226h1v1h-1zM230 226h1v1h-1zM231 226h1v2h-1zM232 227h1v2h-1zM233 228h1v1h-1zM234 228h1v1h-1zM235 228h1v2h-1zM236 229h1v2h-1zM237 230h1v1h-1zM238 230h1v1h-1zM239 230h1v2h-1zM240 231h1v2h-1zM241 232h1v1h-1zM242 232h1v1h-1zM243 232h1v2h-1zM244 233h1v2h-1zM245 234h1v1h-1zM246 234h1v1h-1zM247 234h1v2h-1zM248 235h1v2h-1zM249 236h1v1h-1zM250 236h1v2h-1zM251 237h1v2h-1zM252 238h1v1h-1zM253 238h1v1h-1zM254 238h1v2h-1zM255 239h1v2h-1zM256 240h1v1h-1zM257 240h1v1h-1zM258 240h1v3h-1zM259 242h1v1h-1zM260 242h1v1h-1zM261 242h1v2h-1zM262 243h1v2h-1zM263 244h1v1h-1zM264 244h1v1h-1zM265 244h1v3h-1zM266 246h1v1h-1zM267 246h1v1h-1zM268 246h1v2h-1zM269 247h1v2h-1zM270 248h1v1h-1zM271 248h1v1h-1zM272 248h1v3h-1zM273 250h1v1h-1zM274 250h1v1h-1zM275 250h1v2h-1zM276 251h1v2h-1zM277 252h1v1h-1zM278 252h1v2h-1zM279 253h1v2h-1zM280 254h1v1h-1zM281 254h1v1h-1zM282 254h1v3h-1zM283 256h1v1h-1zM284 256h1v1h-1zM285 256h1v2h-1zM286 257h1v2h-1zM287 258h1v1h-1zM288 258h1v2h-1zM289 259h1v2h-1zM290 260h1v1h-1zM291 260h1v2h-1zM292 261h1v2h-1zM293 262h1v1h-1zM294 262h1v1h-1zM295 262h1v3h-1zM296 264h1v1h-1zM297 264h1v1h-1zM298 264h1v3h-1zM299 266h1v1h-1zM300 266h1v1h-1zM301 266h1v2h-1zM302 267h1v2h-1zM303 268h1v1h-1zM304 268h1v2h-1zM305 269h1v2h-1zM306 270h1v1h-1zM307 270h1v1h-1zM308 270h1v3h-1zM309 272h1v1h-1zM310 272h1v1h-1zM311 272h1v3h-1zM312 274h1v1h-1zM313 274h1v1h-1zM314 274h1v2h-1zM315 275h1v2h-1zM316 276h1v1h-1zM317 276h1v2h-1zM318 277h1v2h-1zM319 278h1v1h-1zM320 278h1v1h-1zM321 278h1v3h-1zM322 280h1v1h-1zM323 280h1v1h-1zM324 280h1v3h-1zM325 282h1v1h-1zM326 282h1v1h-1zM327 282h1v2h-1zM328 283h1v2h-1zM329 284h1v1h-1zM330 284h1v2h-1zM331 285h1v2h-1zM332 286h1v1h-1zM333 286h1v1h-1zM334 286h1v3h-1zM335 288h1v1h-1zM336 288h1v1h-1zM337 288h1v2h-1zM338 289h1v2h-1zM339 290h1v1h-1zM340 290h1v1h-1zM341 290h1v3h-1zM342 292h1v1h-1zM343 292h1v1h-1zM344 292h1v2h-1zM345 293h1v2h-1zM346 294h1v1h-1zM347 294h1v1h-1zM348 294h1v3h-1zM349 296h1v1h-1zM350 296h1v1h-1zM351 296h1v2h-1zM352 297h1v2h-1zM353 298h1v1h-1zM354 298h1v1h-1zM355 298h1v2h-1zM356 299h1v2h-1zM357 300h1v1h-1zM358 300h1v1h-1zM359 300h1v3h-1zM360 302h1v1h-1zM361 302h1v1h-1zM362 302h1v2h-1zM363 303h1v2h-1zM364 304h1v1h-1zM365 304h1v1h-1zM366 304h1v2h-1zM367 305h1v2h-1zM368 306h1v1h-1zM369 306h1v1h-1zM370 306h1v2h-1zM371 307h1v2h-1zM372 308h1v1h-1zM373 308h1v1h-1zM374 308h1v2h-1zM375 309h1v2h-1zM376 310h1v1h-1zM377 310h1v1h-1zM378 310h1v1h-1zM379 310h1v2h-1zM380 311h1v2h-1zM381 312h1v1h-1zM382 312h1v1h-1zM383 312h1v2h-1zM384 313h1v2h-1zM385 314h1v1h-1zM386 314h1v1h-1zM387 314h1v1h-1zM388 314h1v2h-1zM389 315h1v2h-1zM390 316h1v1h-1zM391 316h1v1h-1zM392 316h1v1h-1zM393 316h1v2h-1zM394 317h1v2h-1zM395 318h1v1h-1zM396 318h1v1h-1zM397 318h1v1h-1zM398 318h1v2h-1zM399 319h1v2h-1zM400 320h1v1h-1zM401 320h1v1h-1zM402 320h1v1h-1zM403 320h1v2h-1zM404 321h1v1h-1zM405 321h1v2h-1zM406 322h1v1h-1zM407 322h1v1h-1zM408 322h1v1h-1zM409 322h1v2h-1zM410 323h1v1h-1zM411 323h1v2h-1zM412 324h1v1h-1zM413 324h1v1h-1zM414 324h1v1h-1zM415 324h1v1h-1zM416 324h1v2h-1zM417 325h1v1h-1zM418 325h1v1h-1zM419 325h1v2h-1zM420 326h1v1h-1zM421 326h1v1h-1zM422 326h1v1h-1zM423 326h1v1h-1zM424 326h1v2h-1zM425 327h1v1h-1zM426 327h1v1h-1zM427 327h1v2h-1zM428 328h1v1h-1zM429 328h1v1h-1zM430 328h1v1h-1zM431 328h1v1h-1zM432 328h1v1h-1zM433 328h1v2h-1zM434 329h1v1h-1zM435 329h1v1h-1zM436 329h1v1h-1zM437 329h1v1h-1zM438 329h1v2h-1zM439 330h1v1h-1zM440 330h1v1h-1zM441 330h1v1h-1zM442 330h1v1h-1zM443 330h1v1h-1zM444 330h1v1h-1zM445 330h1v1h-1zM446 330h1v1h-1zM447 330h1v2h-1zM448 331h1v1h-1zM449 331h1v1h-1zM450 331h1v1h-1zM451 331h1v1h-1zM452 331h1v1h-1zM453 331h1v1h-1zM454 331h1v1h-1zM455 331h1v1h-1zM456 331h1v1h-1zM457 331h1v1h-1zM458 331h1v1h-1zM459 331h1v1h-1zM460 331h1v1h-1zM461 331h1v1h-1zM462 331h1v1h-1zM463 331h1v1h-1zM464 331h1v1h-1zM465 331h1v1h-1zM466 331h1v1h-1zM467 331h1v1h-1zM468 331h1v1h-1zM469 331h1v1h-1zM470 331h1v1h-1zM471 331h1v1h-1zM472 331h1v1h-1zM473 331h1v1h-1zM474 331h1v1h-1zM475 331h1v1h-1zM476 331h1v1h-1zM477 331h1v1h-1zM478 331h1v1h-1zM479 331h1v1h-1zM480 331h1v1h-1zM481 330h1v2h-1zM482 330h1v1h-1zM483 330h1v1h-1zM484 330h1v1h-1zM485 330h1v1h-1zM486 330h1v1h-1zM487 330h1v1h-1zM488 330h1v1h-1zM489 330h1v1h-1zM490 329h1v2h-1zM491 329h1v1h-1zM492 329h1v1h-1zM493 329h1v1h-1zM494 329h1v1h-1zM495 328h1v2h-1zM496 328h1v1h-1zM497 328h1v1h-1zM498 328h1v1h-1zM499 328h1v1h-1zM500 328h1v1h-1zM501 327h1v2h-1zM502 327h1v1h-1zM503 327h1v1h-1zM504 326h1v2h-1zM505 326h1v1h-1zM506 326h1v1h-1zM507 326h1v1h-1zM508 326h1v1h-1zM509 325h1v2h-1zM510 325h1v1h-1zM511 325h1v1h-1zM512 324h1v2h-1zM513 324h1v1h-1zM514 324h1v1h-1z" fill="#ff8c00" shape-rendering="crispEdges"/></g><rect x="95" y="141" width="1" height="255" fill="#00ffff" shape-rendering="crispEdges"/><rect x="139" y="140" width="1" height="3" fill="#00e8ff" shape-rendering="crispEdges"/><rect x="139" y="146" width="1" height="3" fill="#00e8ff" shape-rendering="crispEdges"/><rect x="139" y="152" width="1" height="3" fill="#00e8ff" shape-rendering="crispEdges"/><rect x="139" y="158" width="1" height="3" fill="#00e8ff" shape-rendering="crispEdges"/><rect x="139" y="164" width="1" height="3" fill="#00e8ff" shape-rendering="crispEdges"/><rect x="139" y="170" width="1" height="3" fill="#00e8ff" shape-rendering="crispEdges"/><rect x="139" y="176" width="1" height="3" fill="#00e8ff" shape-rendering="crispEdges"/><rect x="139" y="182" width="1" height="3" fill="#00e8ff" shape-rendering="crispEdges"/><rect x="139" y="188" width="1" height="3" fill="#00e8ff" shape-rendering="crispEdges"/><rect x="139" y="194" width="1" height="3" fill="#00e8ff" shape-rendering="crispEdges"/><rect x="139" y="200" width="1" height="3" fill="#00e8ff" shape-rendering="crispEdges"/><rect x="139" y="206" width="1" height="3" fill="#00e8ff" shape-rendering="crispEdges"/><rect x="139" y="212" width="1" height="3" fill="#00e8ff" shape-rendering="crispEdges"/><rect x="139" y="218" width="1" height="3" fill="#00e8ff" shape-rendering="crispEdges"/><rect x="139" y="224" width="1" height="3" fill="#00e8ff" shape-rendering="crispEdges"/><rect x="139" y="230" width="1" height="3" fill="#00e8ff" shape-rendering="crispEdges"/><rect x="139" y="236" width="1" height="3" fill="#00e8ff" shape-rendering="crispEdges"/><rect x="139" y="242" width="1" height="3" fill="#00e8ff" shape-rendering="crispEdges"/><rect x="139" y="248" width="1" height="3" fill="#00e8ff" shape-rendering="crispEdges"/><rect x="139" y="254" width="1" height="3" fill="#00e8ff" shape-rendering="crispEdges"/><rect x="139" y="260" width="1" height="3" fill="#00e8ff" shape-rendering="crispEdges"/><rect x="139" y="266" width="1" height="3" fill="#00e8ff" shape-rendering="crispEdges"/><rect x="139" y="272" width="1" height="3" fill="#00e8ff" shape-rendering="crispEdges"/><rect x="139" y="278" width="1" height="3" fill="#00e8ff" shape-rendering="crispEdges"/><rect x="139" y="284" width="1" height="3" fill="#00e8ff" shape-rendering="crispEdges"/><rect x="139" y="290" width="1" height="3" fill="#00e8ff" shape-rendering="crispEdges"/><rect x="139" y="296" width="1" height="3" fill="#00e8ff" shape-rendering="crispEdges"/><rect x="139" y="302" width="1" height="3" fill="#00e8ff" shape-rendering="crispEdges"/><rect x="139" y="308" width="1" height="3" fill="#00e8ff" shape-rendering="crispEdges"/><rect x="139" y="314" width="1" height="3" fill="#00e8ff" shape-rendering="crispEdges"/><rect x="139" y="320" width="1" height="3" fill="#00e8ff" shape-rendering="crispEdges"/><rect x="139" y="326" width="1" height="3" fill="#00e8ff" shape-rendering="crispEdges"/><rect x="139" y="332" width="1" height="3" fill="#00e8ff" shape-rendering="crispEdges"/><rect x="139" y="338" width="1" height="3" fill="#00e8ff" shape-rendering="crispEdges"/><rect x="139" y="344" width="1" height="3" fill="#00e8ff" shape-rendering="crispEdges"/><rect x="139" y="350" width="1" height="3" fill="#00e8ff" shape-rendering="crispEdges"/><rect x="139" y="356" width="1" height="3" fill="#00e8ff" shape-rendering="crispEdges"/><rect x="139" y="362" width="1" height="3" fill="#00e8ff" shape-rendering="crispEdges"/><rect x="139" y="368" width="1" height="3" fill="#00e8ff" shape-rendering="crispEdges"/><rect x="139" y="374" width="1" height="3" fill="#00e8ff" shape-rendering="crispEdges"/><rect x="139" y="380" width="1" height="3" fill="#00e8ff" shape-rendering="crispEdges"/><rect x="139" y="386" width="1" height="3" fill="#00e8ff" shape-rendering="crispEdges"/><rect x="139" y="392" width="1" height="3" fill="#00e8ff" shape-rendering="crispEdges"/></svg>
<svg width="792" height="582" style="position:absolute;left:0;top:0"><path d="M19 158h2v1h-2zM17 159h4v1h-4zM19 160h2v1h-2zM19 161h2v1h-2zM19 162h2v1h-2zM19 163h2v1h-2zM19 164h2v1h-2zM19 165h2v1h-2zM19 166h2v1h-2zM19 167h2v1h-2zM25 158h6v1h-6zM25 159h2v1h-2zM25 160h2v1h-2zM25 161h2v1h-2zM25 162h2v1h-2zM25 163h5v1h-5zM29 164h2v1h-2zM29 165h2v1h-2zM25 166h2v1h-2zM29 166h2v1h-2zM26 167h4v1h-4zM34 158h4v1h-4zM33 159h2v1h-2zM37 159h2v1h-2zM33 160h2v1h-2zM37 160h2v1h-2zM33 161h2v1h-2zM37 161h2v1h-2zM33 162h2v1h-2zM37 162h2v1h-2zM33 163h2v1h-2zM37 163h2v1h-2zM33 164h2v1h-2zM37 164h2v1h-2zM33 165h2v1h-2zM37 165h2v1h-2zM33 166h2v1h-2zM37 166h2v1h-2zM34 167h4v1h-4zM19 193h2v1h-2zM17 194h4v1h-4zM19 195h2v1h-2zM19 196h2v1h-2zM19 197h2v1h-2zM19 198h2v1h-2zM19 199h2v1h-2zM19 200h2v1h-2zM19 201h2v1h-2zM19 202h2v1h-2zM26 193h4v1h-4zM25 194h2v1h-2zM29 194h2v1h-2zM25 195h2v1h-2zM29 195h2v1h-2zM25 196h2v1h-2zM29 196h2v1h-2zM25 197h2v1h-2zM29 197h2v1h-2zM25 198h2v1h-2zM29 198h2v1h-2zM25 199h2v1h-2zM29 199h2v1h-2zM25 200h2v1h-2zM29 200h2v1h-2zM25 201h2v1h-2zM29 201h2v1h-2zM26 202h4v1h-4zM34 193h4v1h-4zM33 194h2v1h-2zM37 194h2v1h-2zM33 195h2v1h-2zM37 195h2v1h-2zM33 196h2v1h-2zM37 196h2v1h-2zM33 197h2v1h-2zM37 197h2v1h-2zM33 198h2v1h-2zM37 198h2v1h-2zM33 199h2v1h-2zM37 199h2v1h-2zM33 200h2v1h-2zM37 200h2v1h-2zM33 201h2v1h-2zM37 201h2v1h-2zM34 202h4v1h-4zM25 229h6v1h-6zM25 230h2v1h-2zM25 231h2v1h-2zM25 232h2v1h-2zM25 233h2v1h-2zM25 234h5v1h-5zM29 235h2v1h-2zM29 236h2v1h-2zM25 237h2v1h-2zM29 237h2v1h-2zM26 238h4v1h-4zM34 229h4v1h-4zM33 230h2v1h-2zM37 230h2v1h-2zM33 231h2v1h-2zM37 231h2v1h-2zM33 232h2v1h-2zM37 232h2v1h-2zM33 233h2v1h-2zM37 233h2v1h-2zM33 234h2v1h-2zM37 234h2v1h-2zM33 235h2v1h-2zM37 235h2v1h-2zM33 236h2v1h-2zM37 236h2v1h-2zM33 237h2v1h-2zM37 237h2v1h-2zM34 238h4v1h-4zM34 264h4v1h-4zM33 265h2v1h-2zM37 265h2v1h-2zM33 266h2v1h-2zM37 266h2v1h-2zM33 267h2v1h-2zM37 267h2v1h-2zM33 268h2v1h-2zM37 268h2v1h-2zM33 269h2v1h-2zM37 269h2v1h-2zM33 270h2v1h-2zM37 270h2v1h-2zM33 271h2v1h-2zM37 271h2v1h-2zM33 272h2v1h-2zM37 272h2v1h-2zM34 273h4v1h-4zM20 304h5v1h-5zM26 299h6v1h-6zM26 300h2v1h-2zM26 301h2v1h-2zM26 302h2v1h-2zM26 303h2v1h-2zM26 304h5v1h-5zM30 305h2v1h-2zM30 306h2v1h-2zM26 307h2v1h-2zM30 307h2v1h-2zM27 308h4v1h-4zM35 299h4v1h-4zM34 300h2v1h-2zM38 300h2v1h-2zM34 301h2v1h-2zM38 301h2v1h-2zM34 302h2v1h-2zM38 302h2v1h-2zM34 303h2v1h-2zM38 303h2v1h-2zM34 304h2v1h-2zM38 304h2v1h-2zM34 305h2v1h-2zM38 305h2v1h-2zM34 306h2v1h-2zM38 306h2v1h-2zM34 307h2v1h-2zM38 307h2v1h-2zM35 308h4v1h-4zM12 340h5v1h-5zM20 335h2v1h-2zM18 336h4v1h-4zM20 337h2v1h-2zM20 338h2v1h-2zM20 339h2v1h-2zM20 340h2v1h-2zM20 341h2v1h-2zM20 342h2v1h-2zM20 343h2v1h-2zM20 344h2v1h-2zM27 335h4v1h-4zM26 336h2v1h-2zM30 336h2v1h-2zM26 337h2v1h-2zM30 337h2v1h-2zM26 338h2v1h-2zM30 338h2v1h-2zM26 339h2v1h-2zM30 339h2v1h-2zM26 340h2v1h-2zM30 340h2v1h-2zM26 341h2v1h-2zM30 341h2v1h-2zM26 342h2v1h-2zM30 342h2v1h-2zM26 343h2v1h-2zM30 343h2v1h-2zM27 344h4v1h-4zM35 335h4v1h-4zM34 336h2v1h-2zM38 336h2v1h-2zM34 337h2v1h-2zM38 337h2v1h-2zM34 338h2v1h-2zM38 338h2v1h-2zM34 339h2v1h-2zM38 339h2v1h-2zM34 340h2v1h-2zM38 340h2v1h-2zM34 341h2v1h-2zM38 341h2v1h-2zM34 342h2v1h-2zM38 342h2v1h-2zM34 343h2v1h-2zM38 343h2v1h-2zM35 344h4v1h-4zM12 375h5v1h-5zM20 370h2v1h-2zM18 371h4v1h-4zM20 372h2v1h-2zM20 373h2v1h-2zM20 374h2v1h-2zM20 375h2v1h-2zM20 376h2v1h-2zM20 377h2v1h-2zM20 378h2v1h-2zM20 379h2v1h-2zM26 370h6v1h-6zM26 371h2v1h-2zM26 372h2v1h-2zM26 373h2v1h-2zM26 374h2v1h-2zM26 375h5v1h-5zM30 376h2v1h-2zM30 377h2v1h-2zM26 378h2v1h-2zM30 378h2v1h-2zM27 379h4v1h-4zM35 370h4v1h-4zM34 371h2v1h-2zM38 371h2v1h-2zM34 372h2v1h-2zM38 372h2v1h-2zM34 373h2v1h-2zM38 373h2v1h-2zM34 374h2v1h-2zM38 374h2v1h-2zM34 375h2v1h-2zM38 375h2v1h-2zM34 376h2v1h-2zM38 376h2v1h-2zM34 377h2v1h-2zM38 377h2v1h-2zM34 378h2v1h-2zM38 378h2v1h-2zM35 379h4v1h-4zM49 407h4v1h-4zM48 408h2v1h-2zM52 408h2v1h-2zM48 409h2v1h-2zM52 409h2v1h-2zM48 410h2v1h-2zM52 410h2v1h-2zM48 411h2v1h-2zM52 411h2v1h-2zM48 412h2v1h-2zM52 412h2v1h-2zM48 413h2v1h-2zM52 413h2v1h-2zM48 414h2v1h-2zM52 414h2v1h-2zM48 415h2v1h-2zM52 415h2v1h-2zM49 416h4v1h-4zM109 407h2v1h-2zM107 408h4v1h-4zM109 409h2v1h-2zM109 410h2v1h-2zM109 411h2v1h-2zM109 412h2v1h-2zM109 413h2v1h-2zM109 414h2v1h-2zM109 415h2v1h-2zM109 416h2v1h-2zM166 407h4v1h-4zM165 408h2v1h-2zM169 408h2v1h-2zM165 409h2v1h-2zM169 409h2v1h-2zM169 410h2v1h-2zM168 411h2v1h-2zM167 412h2v1h-2zM166 413h2v1h-2zM165 414h2v1h-2zM165 415h2v1h-2zM165 416h6v1h-6zM225 407h4v1h-4zM224 408h2v1h-2zM228 408h2v1h-2zM228 409h2v1h-2zM228 410h2v1h-2zM226 411h3v1h-3zM228 412h2v1h-2zM228 413h2v1h-2zM228 414h2v1h-2zM224 415h2v1h-2zM228 415h2v1h-2zM225 416h4v1h-4zM287 407h2v1h-2zM286 408h3v1h-3zM285 409h4v1h-4zM284 410h5v1h-5zM283 411h2v1h-2zM287 411h2v1h-2zM283 412h2v1h-2zM287 412h2v1h-2zM283 413h6v1h-6zM287 414h2v1h-2zM287 415h2v1h-2zM287 416h2v1h-2zM341 407h6v1h-6zM341 408h2v1h-2zM341 409h2v1h-2zM341 410h2v1h-2zM341 411h2v1h-2zM341 412h5v1h-5zM345 413h2v1h-2zM345 414h2v1h-2zM341 415h2v1h-2zM345 415h2v1h-2zM342 416h4v1h-4zM400 407h4v1h-4zM399 408h2v1h-2zM403 408h2v1h-2zM399 409h2v1h-2zM399 410h2v1h-2zM399 411h5v1h-5zM399 412h2v1h-2zM403 412h2v1h-2zM399 413h2v1h-2zM403 413h2v1h-2zM399 414h2v1h-2zM403 414h2v1h-2zM399 415h2v1h-2zM403 415h2v1h-2zM400 416h4v1h-4zM33 120h7v1h-7zM33 121h2v1h-2zM39 121h2v1h-2zM33 122h2v1h-2zM40 122h2v1h-2zM33 123h2v1h-2zM40 123h2v1h-2zM33 124h2v1h-2zM40 124h2v1h-2zM33 125h2v1h-2zM40 125h2v1h-2zM33 126h2v1h-2zM40 126h2v1h-2zM33 127h2v1h-2zM40 127h2v1h-2zM33 128h2v1h-2zM39 128h2v1h-2zM33 129h7v1h-7zM45 123h5v1h-5zM44 124h2v1h-2zM49 124h2v1h-2zM44 125h7v1h-7zM44 126h2v1h-2zM44 127h2v1h-2zM44 128h2v1h-2zM49 128h2v1h-2zM45 129h5v1h-5zM54 123h6v1h-6zM53 124h2v1h-2zM58 124h2v1h-2zM53 125h2v1h-2zM58 125h2v1h-2zM53 126h2v1h-2zM58 126h2v1h-2zM53 127h2v1h-2zM58 127h2v1h-2zM53 128h2v1h-2zM58 128h2v1h-2zM54 129h6v1h-6zM58 130h2v1h-2zM58 131h2v1h-2zM54 132h5v1h-5z" fill="#000" shape-rendering="crispEdges"/></svg>
<div style="position:absolute;left:14px;top:426px;width:15px;height:16px;box-sizing:border-box;border-right:1px solid #808080;border-bottom:1px solid #808080;box-shadow:inset -1px -1px 0 #a8a8a8;"></div>
<div style="position:absolute;left:19px;top:431px;width:0px;height:0px;border-top:3px solid transparent;border-bottom:3px solid transparent;border-right:3px solid #000;"></div>
<div style="position:absolute;left:28px;top:426px;width:15px;height:16px;box-sizing:border-box;border-right:1px solid #808080;border-bottom:1px solid #808080;box-shadow:inset -1px -1px 0 #a8a8a8;"></div>
<div style="position:absolute;left:35px;top:431px;width:0px;height:0px;border-top:3px solid transparent;border-bottom:3px solid transparent;border-left:3px solid #000;"></div>
<div style="position:absolute;left:51px;top:423px;width:37px;height:20px;box-sizing:border-box;border-top:2px solid #a0a0a0;border-left:2px solid #a0a0a0;border-right:1px solid #b8b8b8;border-bottom:1px solid #b8b8b8;background:#000080;"></div>
<div style="position:absolute;left:51px;top:428px;width:38px;text-align:center;font-size:12px;line-height:12px;color:#ffff00;font-weight:normal;white-space:nowrap;letter-spacing:0.1px;-webkit-text-stroke:0.35px #ffff00;">L.In</div>
<div style="position:absolute;left:90px;top:423px;width:37px;height:20px;box-sizing:border-box;border-top:2px solid #a0a0a0;border-left:2px solid #a0a0a0;border-right:1px solid #b8b8b8;border-bottom:1px solid #b8b8b8;background:#000080;"></div>
<div style="position:absolute;left:90px;top:428px;width:38px;text-align:center;font-size:12px;line-height:12px;color:#ff2050;font-weight:normal;white-space:nowrap;letter-spacing:0.1px;-webkit-text-stroke:0.35px #ff2050;">R.In</div>
<div style="position:absolute;left:134px;top:423px;width:2px;height:21px;background:#00e8ff;"></div>
<div style="position:absolute;left:137px;top:423px;width:94px;height:20px;box-sizing:border-box;border-left:1px solid #a8a8a8;border-top:1px solid #a8a8a8;box-shadow:inset 1px 1px 0 #808080;"></div>
<div style="position:absolute;left:214px;top:424px;width:17px;height:10px;box-sizing:border-box;border-right:1px solid #808080;border-bottom:1px solid #808080;box-shadow:inset -1px -1px 0 #a8a8a8;"></div>
<div style="position:absolute;left:214px;top:434px;width:17px;height:8px;box-sizing:border-box;border-right:1px solid #808080;border-bottom:1px solid #808080;box-shadow:inset -1px -1px 0 #a8a8a8;"></div>
<div style="position:absolute;left:220px;top:428px;width:0px;height:0px;border-left:2px solid transparent;border-right:2px solid transparent;border-bottom:2px solid #000;"></div>
<div style="position:absolute;left:220px;top:437px;width:0px;height:0px;border-left:2px solid transparent;border-right:2px solid transparent;border-top:2px solid #000;"></div>
<div style="position:absolute;left:137px;top:428px;width:67px;text-align:right;font-size:11px;line-height:11px;color:#000;font-weight:normal;white-space:nowrap;letter-spacing:-0.15px;">0.7509814</div>
<div style="position:absolute;left:239px;top:423px;width:2px;height:21px;background:repeating-linear-gradient(to bottom,#00e8ff 0 3px,#000080 3px 5px);"></div>
<div style="position:absolute;left:242px;top:423px;width:94px;height:20px;box-sizing:border-box;border-left:1px solid #a8a8a8;border-top:1px solid #a8a8a8;box-shadow:inset 1px 1px 0 #808080;"></div>
<div style="position:absolute;left:319px;top:424px;width:17px;height:10px;box-sizing:border-box;border-right:1px solid #808080;border-bottom:1px solid #808080;box-shadow:inset -1px -1px 0 #a8a8a8;"></div>
<div style="position:absolute;left:319px;top:434px;width:17px;height:8px;box-sizing:border-box;border-right:1px solid #808080;border-bottom:1px solid #808080;box-shadow:inset -1px -1px 0 #a8a8a8;"></div>
<div style="position:absolute;left:325px;top:428px;width:0px;height:0px;border-left:2px solid transparent;border-right:2px solid transparent;border-bottom:2px solid #000;"></div>
<div style="position:absolute;left:325px;top:437px;width:0px;height:0px;border-left:2px solid transparent;border-right:2px solid transparent;border-top:2px solid #000;"></div>
<div style="position:absolute;left:242px;top:428px;width:68px;text-align:right;font-size:11px;line-height:11px;color:#000;font-weight:normal;white-space:nowrap;letter-spacing:-0.15px;">1.50195</div>
<div style="position:absolute;left:344px;top:423px;width:90px;height:20px;box-sizing:border-box;border-left:1px solid #a8a8a8;border-top:1px solid #a8a8a8;box-shadow:inset 1px 1px 0 #808080;"></div>
<div style="position:absolute;left:344px;top:428px;width:79px;text-align:right;font-size:11px;line-height:11px;color:#000;font-weight:normal;white-space:nowrap;letter-spacing:-0.15px;">0.7509814</div>
<div style="position:absolute;left:6px;top:445px;width:45px;height:20px;box-sizing:border-box;border-right:1px solid #808080;border-bottom:1px solid #808080;box-shadow:inset -1px -1px 0 #a8a8a8;"></div>
<div style="position:absolute;left:6px;top:450px;width:43px;text-align:right;font-size:11px;line-height:11px;color:#000;font-weight:normal;white-space:nowrap;letter-spacing:0px;">Pause</div>
<div style="position:absolute;left:51px;top:445px;width:38px;height:20px;box-sizing:border-box;border-right:1px solid #808080;border-bottom:1px solid #808080;box-shadow:inset -1px -1px 0 #a8a8a8;"></div>
<div style="position:absolute;left:51px;top:450px;width:37px;text-align:center;font-size:11px;line-height:11px;color:#400040;font-weight:normal;white-space:nowrap;letter-spacing:0.1px;">L.Out</div>
<div style="position:absolute;left:89px;top:445px;width:39px;height:20px;box-sizing:border-box;border-right:1px solid #808080;border-bottom:1px solid #808080;box-shadow:inset -1px -1px 0 #a8a8a8;"></div>
<div style="position:absolute;left:89px;top:450px;width:38px;text-align:center;font-size:11px;line-height:11px;color:#400040;font-weight:normal;white-space:nowrap;letter-spacing:0.1px;">R.Out</div>
<div style="position:absolute;left:135px;top:446px;width:10px;height:20px;box-sizing:border-box;background:#00e000;border-left:1px solid #a8a8a8;border-bottom:1px solid #808080;border-right:1px solid #808080;box-shadow:inset -1px -1px 0 #a8a8a8;"></div>
<div style="position:absolute;left:147px;top:445px;width:85px;height:20px;box-sizing:border-box;border-left:1px solid #a8a8a8;border-top:1px solid #a8a8a8;box-shadow:inset 1px 1px 0 #808080;"></div>
<div style="position:absolute;left:147px;top:450px;width:81px;text-align:right;font-size:11px;line-height:11px;color:#000;font-weight:normal;white-space:nowrap;letter-spacing:-0.1px;">109.63456 m</div>
<div style="position:absolute;left:240px;top:446px;width:10px;height:20px;box-sizing:border-box;background:#00e000;border-left:1px solid #a8a8a8;border-bottom:1px solid #808080;border-right:1px solid #808080;box-shadow:inset -1px -1px 0 #a8a8a8;"></div>
<div style="position:absolute;left:251px;top:445px;width:85px;height:20px;box-sizing:border-box;border-left:1px solid #a8a8a8;border-top:1px solid #a8a8a8;box-shadow:inset 1px 1px 0 #808080;"></div>
<div style="position:absolute;left:251px;top:450px;width:80px;text-align:right;font-size:11px;line-height:11px;color:#000;font-weight:normal;white-space:nowrap;letter-spacing:-0.1px;">90.08911 m</div>
<div style="position:absolute;left:344px;top:445px;width:11px;height:20px;background:#000080;"><svg width="11" height="20"><polygon points="5.5,3.5 9.5,16.5 1.5,16.5" fill="none" stroke="#00e0ff" stroke-width="1"/></svg></div>
<div style="position:absolute;left:357px;top:445px;width:80px;height:20px;box-sizing:border-box;border-left:1px solid #a8a8a8;border-top:1px solid #a8a8a8;box-shadow:inset 1px 1px 0 #808080;"></div>
<div style="position:absolute;left:370px;top:450px;text-align:left;font-size:11px;line-height:11px;color:#000;font-weight:normal;white-space:nowrap;letter-spacing:-0.1px;">-19.54545 m</div>
<div style="position:absolute;left:8px;top:470px;width:42px;height:23px;box-sizing:border-box;border-right:1px solid #808080;border-bottom:1px solid #808080;box-shadow:inset -1px -1px 0 #a8a8a8;"></div>
<div style="position:absolute;left:9px;top:476px;width:40px;text-align:center;font-size:11px;line-height:11px;color:#000;font-weight:normal;white-space:nowrap;letter-spacing:0px;">Notes</div>
<div style="position:absolute;left:8px;top:496px;width:42px;height:23px;box-sizing:border-box;border-right:1px solid #808080;border-bottom:1px solid #808080;box-shadow:inset -1px -1px 0 #a8a8a8;"></div>
<div style="position:absolute;left:10px;top:502px;width:40px;text-align:center;font-size:11px;line-height:11px;color:#000;font-weight:normal;white-space:nowrap;letter-spacing:0px;">Font</div>
<div style="position:absolute;left:51px;top:471px;width:740px;height:47px;box-sizing:border-box;border-left:1px solid #a8a8a8;border-top:1px solid #a8a8a8;box-shadow:inset 1px 1px 0 #808080;"></div>
<div style="position:absolute;left:51px;top:521px;width:85px;height:18px;box-sizing:border-box;border-left:1px solid #a8a8a8;border-top:1px solid #a8a8a8;box-shadow:inset 1px 1px 0 #808080;"></div>
<div style="position:absolute;left:51px;top:525px;width:85px;text-align:center;font-size:11px;line-height:11px;color:#000;font-weight:normal;white-space:nowrap;letter-spacing:-0.1px;">File Name</div>
<div style="position:absolute;left:51px;top:542px;width:85px;height:19px;box-sizing:border-box;border-left:1px solid #a8a8a8;border-top:1px solid #a8a8a8;box-shadow:inset 1px 1px 0 #808080;"></div>
<div style="position:absolute;left:51px;top:547px;width:85px;text-align:center;font-size:11px;line-height:11px;color:#000;font-weight:normal;white-space:nowrap;letter-spacing:-0.1px;">PhaseTest</div>
<div style="position:absolute;left:136px;top:521px;width:85px;height:18px;box-sizing:border-box;border-left:1px solid #a8a8a8;border-top:1px solid #a8a8a8;box-shadow:inset 1px 1px 0 #808080;"></div>
<div style="position:absolute;left:136px;top:525px;width:85px;text-align:center;font-size:11px;line-height:11px;color:#000;font-weight:normal;white-space:nowrap;letter-spacing:-0.1px;">sec</div>
<div style="position:absolute;left:136px;top:542px;width:85px;height:19px;box-sizing:border-box;border-left:1px solid #a8a8a8;border-top:1px solid #a8a8a8;box-shadow:inset 1px 1px 0 #808080;"></div>
<div style="position:absolute;left:136px;top:547px;width:85px;text-align:center;font-size:11px;line-height:11px;color:#000;font-weight:normal;white-space:nowrap;letter-spacing:-0.1px;">0.0171</div>
<div style="position:absolute;left:221px;top:521px;width:85px;height:18px;box-sizing:border-box;border-left:1px solid #a8a8a8;border-top:1px solid #a8a8a8;box-shadow:inset 1px 1px 0 #808080;"></div>
<div style="position:absolute;left:221px;top:525px;width:85px;text-align:center;font-size:11px;line-height:11px;color:#000;font-weight:normal;white-space:nowrap;letter-spacing:-0.1px;">Deg</div>
<div style="position:absolute;left:221px;top:542px;width:85px;height:19px;box-sizing:border-box;border-left:1px solid #a8a8a8;border-top:1px solid #a8a8a8;box-shadow:inset 1px 1px 0 #808080;"></div>
<div style="position:absolute;left:221px;top:547px;width:85px;text-align:center;font-size:11px;line-height:11px;color:#000;font-weight:normal;white-space:nowrap;letter-spacing:-0.1px;">-87.2311</div>
<div style="position:absolute;left:306px;top:521px;width:85px;height:18px;box-sizing:border-box;border-left:1px solid #a8a8a8;border-top:1px solid #a8a8a8;box-shadow:inset 1px 1px 0 #808080;"></div>
<div style="position:absolute;left:306px;top:525px;width:85px;text-align:center;font-size:11px;line-height:11px;color:#000;font-weight:normal;white-space:nowrap;letter-spacing:-0.1px;">Label 4</div>
<div style="position:absolute;left:306px;top:542px;width:85px;height:19px;box-sizing:border-box;border-left:1px solid #a8a8a8;border-top:1px solid #a8a8a8;box-shadow:inset 1px 1px 0 #808080;"></div>
<div style="position:absolute;left:306px;top:547px;width:85px;text-align:center;font-size:11px;line-height:11px;color:#000;font-weight:normal;white-space:nowrap;letter-spacing:-0.1px;"></div>
<div style="position:absolute;left:391px;top:521px;width:85px;height:18px;box-sizing:border-box;border-left:1px solid #a8a8a8;border-top:1px solid #a8a8a8;box-shadow:inset 1px 1px 0 #808080;"></div>
<div style="position:absolute;left:391px;top:525px;width:85px;text-align:center;font-size:11px;line-height:11px;color:#000;font-weight:normal;white-space:nowrap;letter-spacing:-0.1px;">Label 5</div>
<div style="position:absolute;left:391px;top:542px;width:85px;height:19px;box-sizing:border-box;border-left:1px solid #a8a8a8;border-top:1px solid #a8a8a8;box-shadow:inset 1px 1px 0 #808080;"></div>
<div style="position:absolute;left:391px;top:547px;width:85px;text-align:center;font-size:11px;line-height:11px;color:#000;font-weight:normal;white-space:nowrap;letter-spacing:-0.1px;"></div>
<div style="position:absolute;left:476px;top:521px;width:85px;height:18px;box-sizing:border-box;border-left:1px solid #a8a8a8;border-top:1px solid #a8a8a8;box-shadow:inset 1px 1px 0 #808080;"></div>
<div style="position:absolute;left:476px;top:525px;width:85px;text-align:center;font-size:11px;line-height:11px;color:#000;font-weight:normal;white-space:nowrap;letter-spacing:-0.1px;">Label 6</div>
<div style="position:absolute;left:476px;top:542px;width:85px;height:19px;box-sizing:border-box;border-left:1px solid #a8a8a8;border-top:1px solid #a8a8a8;box-shadow:inset 1px 1px 0 #808080;"></div>
<div style="position:absolute;left:476px;top:547px;width:85px;text-align:center;font-size:11px;line-height:11px;color:#000;font-weight:normal;white-space:nowrap;letter-spacing:-0.1px;"></div>
<div style="position:absolute;left:118px;top:30px;width:393px;height:129px;box-sizing:border-box;background:#5a8ede;border-radius:7px 7px 0 0;"></div>
<div style="position:absolute;left:119px;top:31px;width:391px;height:127px;box-sizing:border-box;background:#9ac4ec;border-radius:6px 6px 0 0;"></div>
<div style="position:absolute;left:120px;top:32px;width:389px;height:125px;box-sizing:border-box;background:#6a9ce2;border-radius:5px 5px 0 0;"></div>
<div style="position:absolute;left:119px;top:31px;width:391px;height:28px;border-radius:6px 6px 0 0;background:linear-gradient(to bottom,#90b8e8 0px,#5278c0 1.5px,#5580c0 5px,#5a8ec8 14px,#6aa0da 14px,#8cc0e6 26px,#92c6ea 27px,#7aaae2 28px);"></div>
<div style="position:absolute;left:125px;top:40px;text-align:left;font-size:13px;line-height:13px;color:#fff;font-weight:bold;white-space:nowrap;letter-spacing:-0.15px;text-shadow:1px 1px 0 rgba(40,70,150,0.6);">Phase - Degrees</div>
<div style="position:absolute;left:484px;top:35px;width:21px;height:21px;box-sizing:border-box;border:1px solid #3558b0;border-radius:3px;background:linear-gradient(to bottom,#74a0e0 0,#4e80d4 35%,#3f74ce 50%,#6a9ee0 80%,#84b4ea 100%);box-shadow:inset 0 0 0 1px rgba(255,255,255,0.22);"><svg width="21" height="21" viewBox="0 0 21 21" style="position:absolute;left:-1px;top:-1px;"><path d="M6,6 L15.3,15.3 M15.3,6 L6,15.3" stroke="#fff" stroke-width="2.2"/></svg></div>
<div style="position:absolute;left:121px;top:59px;width:387px;height:97px;background:#fff;"></div>
<div style="position:absolute;left:149px;top:111px;width:23px;height:7px;background:#000;"></div>
<div style="position:absolute;left:174.48px;top:61.50px;font-size:88px;line-height:88px;color:#000;white-space:nowrap;-webkit-text-stroke:0.4px #000;">8</div>
<div style="position:absolute;left:220.99px;top:61.50px;font-size:88px;line-height:88px;color:#000;white-space:nowrap;-webkit-text-stroke:0.4px #000;">7</div>
<div style="position:absolute;left:291.87px;top:61.50px;font-size:88px;line-height:88px;color:#000;white-space:nowrap;-webkit-text-stroke:0.4px #000;">2</div>
<div style="position:absolute;left:340.25px;top:61.50px;font-size:88px;line-height:88px;color:#000;white-space:nowrap;-webkit-text-stroke:0.4px #000;">3</div>
<div style="position:absolute;left:277px;top:127px;width:9px;height:9px;background:#000;"></div>
<svg width="792" height="582" style="position:absolute;left:0;top:0"><path d="M418.7,75 L418.7,136.5 L410.7,136.5 L410.7,89 C406.7,92.5 401.7,95 396.09999999999997,96.5 L396.09999999999997,90.2 C403.7,86.5 410.7,81 414.0,75 Z M466,75 L466,136.5 L458,136.5 L458,89 C454,92.5 449,95 443.4,96.5 L443.4,90.2 C451,86.5 458,81 461.3,75 Z" fill="#000"/></svg>
<div style="position:absolute;left:121px;top:155px;width:387px;height:4px;background:linear-gradient(to bottom,#6a9ce2 0,#6a9ce2 1px,#9ac4ec 1px,#9ac4ec 3px,#5a8ede 3px);"></div>
<div style="position:absolute;left:514px;top:6px;width:276px;height:576px;box-sizing:border-box;background:#5a8ede;border-radius:7px 7px 0 0;"></div>
<div style="position:absolute;left:515px;top:7px;width:274px;height:574px;box-sizing:border-box;background:#9ac4ec;border-radius:6px 6px 0 0;"></div>
<div style="position:absolute;left:516px;top:8px;width:272px;height:572px;box-sizing:border-box;background:#6a9ce2;border-radius:5px 5px 0 0;"></div>
<div style="position:absolute;left:515px;top:7px;width:274px;height:28px;border-radius:6px 6px 0 0;background:linear-gradient(to bottom,#90b8e8 0px,#5278c0 1.5px,#5580c0 5px,#5a8ec8 14px,#6aa0da 14px,#8cc0e6 26px,#92c6ea 27px,#7aaae2 28px);"></div>
<div style="position:absolute;left:520px;top:16px;text-align:left;font-size:13px;line-height:13px;color:#fff;font-weight:bold;white-space:nowrap;letter-spacing:-0.15px;text-shadow:1px 1px 0 rgba(40,70,150,0.6);">Macro List</div>
<div style="position:absolute;left:741px;top:11px;width:21px;height:21px;box-sizing:border-box;border:1px solid #3558b0;border-radius:3px;background:linear-gradient(to bottom,#74a0e0 0,#4e80d4 35%,#3f74ce 50%,#6a9ee0 80%,#84b4ea 100%);box-shadow:inset 0 0 0 1px rgba(255,255,255,0.22);"><svg width="21" height="21" viewBox="0 0 21 21" style="position:absolute;left:-1px;top:-1px;"><path d="M6.9,8.3 C6.9,4.9 14.3,4.7 14.3,8.1 C14.3,10.7 11,10.6 11,13.8" stroke="#fff" stroke-width="2.2" fill="none"/><rect x="9.8" y="15" width="2.4" height="2.3" fill="#fff"/></svg></div>
<div style="position:absolute;left:764px;top:11px;width:21px;height:21px;box-sizing:border-box;border:1px solid #3558b0;border-radius:3px;background:linear-gradient(to bottom,#74a0e0 0,#4e80d4 35%,#3f74ce 50%,#6a9ee0 80%,#84b4ea 100%);box-shadow:inset 0 0 0 1px rgba(255,255,255,0.22);"><svg width="21" height="21" viewBox="0 0 21 21" style="position:absolute;left:-1px;top:-1px;"><path d="M6,6 L15.3,15.3 M15.3,6 L6,15.3" stroke="#fff" stroke-width="2.2"/></svg></div>
<div style="position:absolute;left:517px;top:35px;width:270px;height:544px;background:#fff;"></div>
<div style="position:absolute;left:529px;top:53px;text-align:left;font-size:11px;line-height:11px;color:#000;font-weight:normal;white-space:nowrap;letter-spacing:-0.15px;">ID</div>
<div style="position:absolute;left:566px;top:53px;text-align:left;font-size:11px;line-height:11px;color:#000;font-weight:normal;white-space:nowrap;letter-spacing:-0.15px;">Name</div>
<div style="position:absolute;left:671px;top:53px;text-align:left;font-size:11px;line-height:11px;color:#000;font-weight:normal;white-space:nowrap;letter-spacing:-0.15px;">Description</div>
<div style="position:absolute;left:525px;top:68px;width:254px;height:142px;box-sizing:border-box;border-left:1px solid #a8a8a8;border-top:1px solid #a8a8a8;box-shadow:inset 1px 1px 0 #808080;"></div>
<div style="position:absolute;left:529px;top:72px;text-align:left;font-size:11px;line-height:11px;color:#a0a0a0;font-weight:normal;white-space:nowrap;letter-spacing:-0.15px;">!</div>
<div style="position:absolute;left:547px;top:72px;text-align:left;font-size:11px;line-height:11px;color:#a0a0a0;font-weight:normal;white-space:nowrap;letter-spacing:-0.1px;">First_Run</div>
<div style="position:absolute;left:529px;top:85px;text-align:left;font-size:11px;line-height:11px;color:#a0a0a0;font-weight:normal;white-space:nowrap;letter-spacing:-0.15px;">A</div>
<div style="position:absolute;left:547px;top:85px;text-align:left;font-size:11px;line-height:11px;color:#a0a0a0;font-weight:normal;white-space:nowrap;letter-spacing:-0.1px;">Arb_Rand_Distr</div>
<div style="position:absolute;left:638px;top:85px;text-align:left;font-size:11px;line-height:11px;color:#a0a0a0;font-weight:normal;white-space:nowrap;letter-spacing:-0.15px;">Random Distributions</div>
<div style="position:absolute;left:529px;top:98px;text-align:left;font-size:11px;line-height:11px;color:#a0a0a0;font-weight:normal;white-space:nowrap;letter-spacing:-0.15px;">B</div>
<div style="position:absolute;left:547px;top:98px;text-align:left;font-size:11px;line-height:11px;color:#a0a0a0;font-weight:normal;white-space:nowrap;letter-spacing:-0.1px;">Beats_Demo</div>
<div style="position:absolute;left:529px;top:111px;text-align:left;font-size:11px;line-height:11px;color:#a0a0a0;font-weight:normal;white-space:nowrap;letter-spacing:-0.15px;">C</div>
<div style="position:absolute;left:547px;top:111px;text-align:left;font-size:11px;line-height:11px;color:#a0a0a0;font-weight:normal;white-space:nowrap;letter-spacing:-0.1px;">Diff_Chan</div>
<div style="position:absolute;left:529px;top:124px;text-align:left;font-size:11px;line-height:11px;color:#a0a0a0;font-weight:normal;white-space:nowrap;letter-spacing:-0.15px;">D</div>
<div style="position:absolute;left:547px;top:124px;text-align:left;font-size:11px;line-height:11px;color:#a0a0a0;font-weight:normal;white-space:nowrap;letter-spacing:-0.1px;">DaqMusic</div>
<div style="position:absolute;left:529px;top:137px;text-align:left;font-size:11px;line-height:11px;color:#a0a0a0;font-weight:normal;white-space:nowrap;letter-spacing:-0.15px;">E</div>
<div style="position:absolute;left:547px;top:137px;text-align:left;font-size:11px;line-height:11px;color:#a0a0a0;font-weight:normal;white-space:nowrap;letter-spacing:-0.1px;">Engine_Sim</div>
<div style="position:absolute;left:617px;top:137px;text-align:left;font-size:11px;line-height:11px;color:#a0a0a0;font-weight:normal;white-space:nowrap;letter-spacing:-0.15px;">Crank / Cam Simulator</div>
<div style="position:absolute;left:529px;top:150px;text-align:left;font-size:11px;line-height:11px;color:#a0a0a0;font-weight:normal;white-space:nowrap;letter-spacing:-0.15px;">F</div>
<div style="position:absolute;left:547px;top:150px;text-align:left;font-size:11px;line-height:11px;color:#a0a0a0;font-weight:normal;white-space:nowrap;letter-spacing:-0.1px;">FFT_Filter</div>
<div style="position:absolute;left:529px;top:163px;text-align:left;font-size:11px;line-height:11px;color:#a0a0a0;font-weight:normal;white-space:nowrap;letter-spacing:-0.15px;">I</div>
<div style="position:absolute;left:547px;top:163px;text-align:left;font-size:11px;line-height:11px;color:#a0a0a0;font-weight:normal;white-space:nowrap;letter-spacing:-0.1px;">IMD_Meter</div>
<div style="position:absolute;left:529px;top:176px;text-align:left;font-size:11px;line-height:11px;color:#a0a0a0;font-weight:normal;white-space:nowrap;letter-spacing:-0.15px;">L</div>
<div style="position:absolute;left:547px;top:176px;text-align:left;font-size:11px;line-height:11px;color:#a0a0a0;font-weight:normal;white-space:nowrap;letter-spacing:-0.1px;">Lissajous</div>
<div style="position:absolute;left:616px;top:176px;text-align:left;font-size:11px;line-height:11px;color:#a0a0a0;font-weight:normal;white-space:nowrap;letter-spacing:-0.15px;">X-Y mode</div>
<div style="position:absolute;left:527px;top:187px;width:234px;height:13px;background:#3163b5;"></div>
<div style="position:absolute;left:529px;top:189px;text-align:left;font-size:11px;line-height:11px;color:#b8c4dc;font-weight:normal;white-space:nowrap;letter-spacing:-0.15px;">P</div>
<div style="position:absolute;left:547px;top:189px;text-align:left;font-size:11px;line-height:11px;color:#b8c4dc;font-weight:normal;white-space:nowrap;letter-spacing:-0.1px;">Phase_Meter</div>
<div style="position:absolute;left:762px;top:70px;width:16px;height:140px;background:#f4f4f0;"></div>
<div style="position:absolute;left:762px;top:70px;width:16px;height:16px;box-sizing:border-box;border:1px solid #b4c8ee;border-radius:2px;background:linear-gradient(to right,#d4e2fa,#c2d6f6);"><svg width="14" height="14"><path d="M3.5,9 L7,5.5 L10.5,9" stroke="#4d6185" stroke-width="2" fill="none"/></svg></div>
<div style="position:absolute;left:762px;top:88px;width:16px;height:122px;box-sizing:border-box;border:1px solid #98a6c4;border-radius:2px;background:linear-gradient(to right,#c8daf8,#e2ecfc 35%,#c4d6f4 75%,#b8cbee);"><svg width="14" height="120"><path d="M4,54.5h6M4,56.5h6M4,58.5h6M4,60.5h6" stroke="#8ca4d0" stroke-width="1"/></svg></div>
<div style="position:absolute;left:562px;top:514px;width:90px;height:20px;box-sizing:border-box;border-right:1px solid #808080;border-bottom:1px solid #808080;box-shadow:inset -1px -1px 0 #a8a8a8;"></div>
<div style="position:absolute;left:562px;top:519px;width:88px;text-align:center;font-size:11px;line-height:11px;color:#a0a0a0;font-weight:normal;white-space:nowrap;letter-spacing:-0.1px;">Save File</div>
<div style="position:absolute;left:652px;top:514px;width:90px;height:20px;box-sizing:border-box;border-right:1px solid #808080;border-bottom:1px solid #808080;box-shadow:inset -1px -1px 0 #a8a8a8;"></div>
<div style="position:absolute;left:652px;top:519px;width:88px;text-align:center;font-size:11px;line-height:11px;color:#a0a0a0;font-weight:normal;white-space:nowrap;letter-spacing:-0.1px;">Load File</div>
<div style="position:absolute;left:622px;top:539px;width:60px;height:23px;box-sizing:border-box;border-right:1px solid #808080;border-bottom:1px solid #808080;box-shadow:inset -1px -1px 0 #a8a8a8;"></div>
<div style="position:absolute;left:622px;top:545px;width:58px;text-align:center;font-size:11px;line-height:11px;color:#000;font-weight:normal;white-space:nowrap;letter-spacing:0.2px;">OK</div>
<div style="position:absolute;left:422px;top:202px;width:365px;height:308px;box-sizing:border-box;background:#5a8ede;border-radius:7px 7px 0 0;"></div>
<div style="position:absolute;left:423px;top:203px;width:363px;height:306px;box-sizing:border-box;background:#9ac4ec;border-radius:6px 6px 0 0;"></div>
<div style="position:absolute;left:424px;top:204px;width:361px;height:304px;box-sizing:border-box;background:#6a9ce2;border-radius:5px 5px 0 0;"></div>
<div style="position:absolute;left:423px;top:203px;width:363px;height:28px;border-radius:6px 6px 0 0;background:linear-gradient(to bottom,#90b8e8 0px,#5278c0 1.5px,#5580c0 5px,#5a8ec8 14px,#6aa0da 14px,#8cc0e6 26px,#92c6ea 27px,#7aaae2 28px);"></div>
<div style="position:absolute;left:428px;top:212px;text-align:left;font-size:13px;line-height:13px;color:#fff;font-weight:bold;white-space:nowrap;letter-spacing:-0.15px;text-shadow:1px 1px 0 rgba(40,70,150,0.6);">Phase Meter Controls</div>
<div style="position:absolute;left:739px;top:207px;width:21px;height:21px;box-sizing:border-box;border:1px solid #3558b0;border-radius:3px;background:linear-gradient(to bottom,#74a0e0 0,#4e80d4 35%,#3f74ce 50%,#6a9ee0 80%,#84b4ea 100%);box-shadow:inset 0 0 0 1px rgba(255,255,255,0.22);"><svg width="21" height="21" viewBox="0 0 21 21" style="position:absolute;left:-1px;top:-1px;"><path d="M6.9,8.3 C6.9,4.9 14.3,4.7 14.3,8.1 C14.3,10.7 11,10.6 11,13.8" stroke="#fff" stroke-width="2.2" fill="none"/><rect x="9.8" y="15" width="2.4" height="2.3" fill="#fff"/></svg></div>
<div style="position:absolute;left:762px;top:207px;width:21px;height:21px;box-sizing:border-box;border:1px solid #3558b0;border-radius:3px;background:linear-gradient(to bottom,#74a0e0 0,#4e80d4 35%,#3f74ce 50%,#6a9ee0 80%,#84b4ea 100%);box-shadow:inset 0 0 0 1px rgba(255,255,255,0.22);"><svg width="21" height="21" viewBox="0 0 21 21" style="position:absolute;left:-1px;top:-1px;"><path d="M6,6 L15.3,15.3 M15.3,6 L6,15.3" stroke="#fff" stroke-width="2.2"/></svg></div>
<div style="position:absolute;left:425px;top:231px;width:359px;height:276px;background:#fff;"></div>
<div style="position:absolute;left:440px;top:244px;width:148px;text-align:center;font-size:11px;line-height:11px;color:#000;font-weight:normal;white-space:nowrap;letter-spacing:-0.1px;">Reference Frequency</div>
<div style="position:absolute;left:440px;top:259px;width:149px;height:19px;box-sizing:border-box;border-left:1px solid #a8a8a8;border-top:1px solid #a8a8a8;box-shadow:inset 1px 1px 0 #808080;"></div>
<div style="position:absolute;left:440px;top:264px;width:132px;text-align:center;font-size:11px;line-height:11px;color:#000;font-weight:normal;white-space:nowrap;letter-spacing:0.15px;">1000.0000000</div>
<div style="position:absolute;left:572px;top:260px;width:17px;height:10px;box-sizing:border-box;border-right:1px solid #808080;border-bottom:1px solid #808080;box-shadow:inset -1px -1px 0 #a8a8a8;"></div>
<div style="position:absolute;left:572px;top:270px;width:17px;height:8px;box-sizing:border-box;border-right:1px solid #808080;border-bottom:1px solid #808080;box-shadow:inset -1px -1px 0 #a8a8a8;"></div>
<div style="position:absolute;left:578px;top:264px;width:0px;height:0px;border-left:2px solid transparent;border-right:2px solid transparent;border-bottom:2px solid #000;"></div>
<div style="position:absolute;left:578px;top:273px;width:0px;height:0px;border-left:2px solid transparent;border-right:2px solid transparent;border-top:2px solid #000;"></div>
<div style="position:absolute;left:440px;top:290px;width:149px;height:1px;background:#a8a8a8;"></div>
<div style="position:absolute;left:440px;top:291px;width:149px;height:1px;background:#808080;"></div>
<div style="position:absolute;left:446px;top:280px;width:11px;height:22px;box-sizing:border-box;background:#fff;border-right:1px solid #808080;border-bottom:1px solid #808080;box-shadow:inset -1px -1px 0 #a8a8a8;clip-path:polygon(0 0,45% 0,100% 28%,100% 100%,0 100%);"></div>
<div style="position:absolute;left:450px;top:280px;width:8px;height:2px;background:#808080;transform:rotate(42deg);transform-origin:0 0;"></div>
<div style="position:absolute;left:620px;top:244px;width:148px;text-align:center;font-size:11px;line-height:11px;color:#a0a0a0;font-weight:normal;white-space:nowrap;letter-spacing:-0.1px;">Update Interval, sec</div>
<div style="position:absolute;left:620px;top:259px;width:149px;height:19px;box-sizing:border-box;border-left:1px solid #a8a8a8;border-top:1px solid #a8a8a8;box-shadow:inset 1px 1px 0 #808080;"></div>
<div style="position:absolute;left:620px;top:264px;width:132px;text-align:center;font-size:11px;line-height:11px;color:#a0a0a0;font-weight:normal;white-space:nowrap;letter-spacing:0.15px;">0.0100000</div>
<div style="position:absolute;left:752px;top:260px;width:17px;height:10px;box-sizing:border-box;border-right:1px solid #808080;border-bottom:1px solid #808080;box-shadow:inset -1px -1px 0 #a8a8a8;"></div>
<div style="position:absolute;left:752px;top:270px;width:17px;height:8px;box-sizing:border-box;border-right:1px solid #808080;border-bottom:1px solid #808080;box-shadow:inset -1px -1px 0 #a8a8a8;"></div>
<div style="position:absolute;left:758px;top:264px;width:0px;height:0px;border-left:2px solid transparent;border-right:2px solid transparent;border-bottom:2px solid #000;"></div>
<div style="position:absolute;left:758px;top:273px;width:0px;height:0px;border-left:2px solid transparent;border-right:2px solid transparent;border-top:2px solid #000;"></div>
<div style="position:absolute;left:620px;top:290px;width:149px;height:1px;background:#a8a8a8;"></div>
<div style="position:absolute;left:620px;top:291px;width:149px;height:1px;background:#808080;"></div>
<div style="position:absolute;left:628px;top:280px;width:11px;height:22px;box-sizing:border-box;background:#fff;border-right:1px solid #808080;border-bottom:1px solid #808080;box-shadow:inset -1px -1px 0 #a8a8a8;clip-path:polygon(0 0,45% 0,100% 28%,100% 100%,0 100%);"></div>
<div style="position:absolute;left:632px;top:280px;width:8px;height:2px;background:#808080;transform:rotate(42deg);transform-origin:0 0;"></div>
<div style="position:absolute;left:440px;top:312px;width:148px;text-align:center;font-size:11px;line-height:11px;color:#000;font-weight:normal;white-space:nowrap;letter-spacing:-0.1px;">Right Output Phase, Deg</div>
<div style="position:absolute;left:440px;top:327px;width:149px;height:19px;box-sizing:border-box;border-left:1px solid #a8a8a8;border-top:1px solid #a8a8a8;box-shadow:inset 1px 1px 0 #808080;"></div>
<div style="position:absolute;left:440px;top:332px;width:132px;text-align:center;font-size:11px;line-height:11px;color:#000;font-weight:normal;white-space:nowrap;letter-spacing:0.15px;">0.0000000</div>
<div style="position:absolute;left:572px;top:328px;width:17px;height:10px;box-sizing:border-box;border-right:1px solid #808080;border-bottom:1px solid #808080;box-shadow:inset -1px -1px 0 #a8a8a8;"></div>
<div style="position:absolute;left:572px;top:338px;width:17px;height:8px;box-sizing:border-box;border-right:1px solid #808080;border-bottom:1px solid #808080;box-shadow:inset -1px -1px 0 #a8a8a8;"></div>
<div style="position:absolute;left:578px;top:332px;width:0px;height:0px;border-left:2px solid transparent;border-right:2px solid transparent;border-bottom:2px solid #000;"></div>
<div style="position:absolute;left:578px;top:341px;width:0px;height:0px;border-left:2px solid transparent;border-right:2px solid transparent;border-top:2px solid #000;"></div>
<div style="position:absolute;left:440px;top:358px;width:149px;height:1px;background:#a8a8a8;"></div>
<div style="position:absolute;left:440px;top:359px;width:149px;height:1px;background:#808080;"></div>
<div style="position:absolute;left:510px;top:348px;width:11px;height:22px;box-sizing:border-box;background:#fff;border-right:1px solid #808080;border-bottom:1px solid #808080;box-shadow:inset -1px -1px 0 #a8a8a8;clip-path:polygon(0 0,45% 0,100% 28%,100% 100%,0 100%);"></div>
<div style="position:absolute;left:514px;top:348px;width:8px;height:2px;background:#808080;transform:rotate(42deg);transform-origin:0 0;"></div>
<div style="position:absolute;left:620px;top:312px;width:148px;text-align:center;font-size:11px;line-height:11px;color:#000;font-weight:normal;white-space:nowrap;letter-spacing:-0.1px;">Phase Offset, Deg</div>
<div style="position:absolute;left:620px;top:327px;width:149px;height:19px;box-sizing:border-box;border-left:1px solid #a8a8a8;border-top:1px solid #a8a8a8;box-shadow:inset 1px 1px 0 #808080;"></div>
<div style="position:absolute;left:620px;top:332px;width:132px;text-align:center;font-size:11px;line-height:11px;color:#000;font-weight:normal;white-space:nowrap;letter-spacing:0.15px;">0.0000000</div>
<div style="position:absolute;left:752px;top:328px;width:17px;height:10px;box-sizing:border-box;border-right:1px solid #808080;border-bottom:1px solid #808080;box-shadow:inset -1px -1px 0 #a8a8a8;"></div>
<div style="position:absolute;left:752px;top:338px;width:17px;height:8px;box-sizing:border-box;border-right:1px solid #808080;border-bottom:1px solid #808080;box-shadow:inset -1px -1px 0 #a8a8a8;"></div>
<div style="position:absolute;left:758px;top:332px;width:0px;height:0px;border-left:2px solid transparent;border-right:2px solid transparent;border-bottom:2px solid #000;"></div>
<div style="position:absolute;left:758px;top:341px;width:0px;height:0px;border-left:2px solid transparent;border-right:2px solid transparent;border-top:2px solid #000;"></div>
<div style="position:absolute;left:620px;top:358px;width:149px;height:1px;background:#a8a8a8;"></div>
<div style="position:absolute;left:620px;top:359px;width:149px;height:1px;background:#808080;"></div>
<div style="position:absolute;left:690px;top:348px;width:11px;height:22px;box-sizing:border-box;background:#fff;border-right:1px solid #808080;border-bottom:1px solid #808080;box-shadow:inset -1px -1px 0 #a8a8a8;clip-path:polygon(0 0,45% 0,100% 28%,100% 100%,0 100%);"></div>
<div style="position:absolute;left:694px;top:348px;width:8px;height:2px;background:#808080;transform:rotate(42deg);transform-origin:0 0;"></div>
<div style="position:absolute;left:440px;top:384px;width:150px;height:24px;box-sizing:border-box;border-right:1px solid #808080;border-bottom:1px solid #808080;box-shadow:inset -1px -1px 0 #a8a8a8;"></div>
<div style="position:absolute;left:440px;top:391px;width:148px;text-align:center;font-size:11px;line-height:11px;color:#000;font-weight:normal;white-space:nowrap;letter-spacing:-0.2px;">Arbitrary Freqency</div>
<div style="position:absolute;left:440px;top:411px;width:150px;height:24px;box-sizing:border-box;border-right:1px solid #808080;border-bottom:1px solid #808080;box-shadow:inset -1px -1px 0 #a8a8a8;"></div>
<div style="position:absolute;left:440px;top:418px;width:148px;text-align:center;font-size:11px;line-height:11px;color:#000;font-weight:normal;white-space:nowrap;letter-spacing:-0.2px;">Data Logging</div>
<div style="position:absolute;left:440px;top:439px;width:150px;height:24px;box-sizing:border-box;border-right:1px solid #808080;border-bottom:1px solid #808080;box-shadow:inset -1px -1px 0 #a8a8a8;"></div>
<div style="position:absolute;left:440px;top:446px;width:148px;text-align:center;font-size:11px;line-height:11px;color:#000;font-weight:normal;white-space:nowrap;letter-spacing:-0.2px;">External Inputs</div>
<div style="position:absolute;left:620px;top:384px;width:150px;height:24px;box-sizing:border-box;border-left:1px solid #a8a8a8;border-top:1px solid #a8a8a8;box-shadow:inset 1px 1px 0 #808080;"></div>
<div style="position:absolute;left:620px;top:391px;width:150px;text-align:center;font-size:11px;line-height:11px;color:#000;font-weight:normal;white-space:nowrap;letter-spacing:-0.2px;">Plot to File</div>
<div style="position:absolute;left:620px;top:411px;width:150px;height:24px;box-sizing:border-box;border-right:1px solid #808080;border-bottom:1px solid #808080;box-shadow:inset -1px -1px 0 #a8a8a8;"></div>
<div style="position:absolute;left:620px;top:418px;width:148px;text-align:center;font-size:11px;line-height:11px;color:#000;font-weight:normal;white-space:nowrap;letter-spacing:-0.2px;">Averager</div>
<div style="position:absolute;left:620px;top:439px;width:150px;height:24px;box-sizing:border-box;border-right:1px solid #808080;border-bottom:1px solid #808080;box-shadow:inset -1px -1px 0 #a8a8a8;"></div>
<div style="position:absolute;left:620px;top:446px;width:148px;text-align:center;font-size:11px;line-height:11px;color:#000;font-weight:normal;white-space:nowrap;letter-spacing:-0.2px;">Degrees</div>
<div style="position:absolute;left:440px;top:467px;width:134px;height:23px;box-sizing:border-box;border-left:1px solid #a8a8a8;border-top:1px solid #a8a8a8;box-shadow:inset 1px 1px 0 #808080;"></div>
<div style="position:absolute;left:440px;top:474px;width:134px;text-align:center;font-size:11px;line-height:11px;color:#000;font-weight:normal;white-space:nowrap;letter-spacing:-0.2px;">Show Raw Channels</div>
<div style="position:absolute;left:635px;top:467px;width:134px;height:23px;box-sizing:border-box;border-left:1px solid #a8a8a8;border-top:1px solid #a8a8a8;box-shadow:inset 1px 1px 0 #808080;"></div>
<div style="position:absolute;left:635px;top:474px;width:134px;text-align:center;font-size:11px;line-height:11px;color:#000;font-weight:normal;white-space:nowrap;letter-spacing:-0.2px;">Show Meter</div>
<div style="position:absolute;left:583px;top:470px;width:45px;height:29px;box-sizing:border-box;border-right:1px solid #808080;border-bottom:1px solid #808080;box-shadow:inset -1px -1px 0 #a8a8a8;"></div>
<div style="position:absolute;left:584px;top:479px;width:43px;text-align:center;font-size:11px;line-height:11px;color:#000;font-weight:normal;white-space:nowrap;letter-spacing:0.2px;">OK</div>
</body></html>
